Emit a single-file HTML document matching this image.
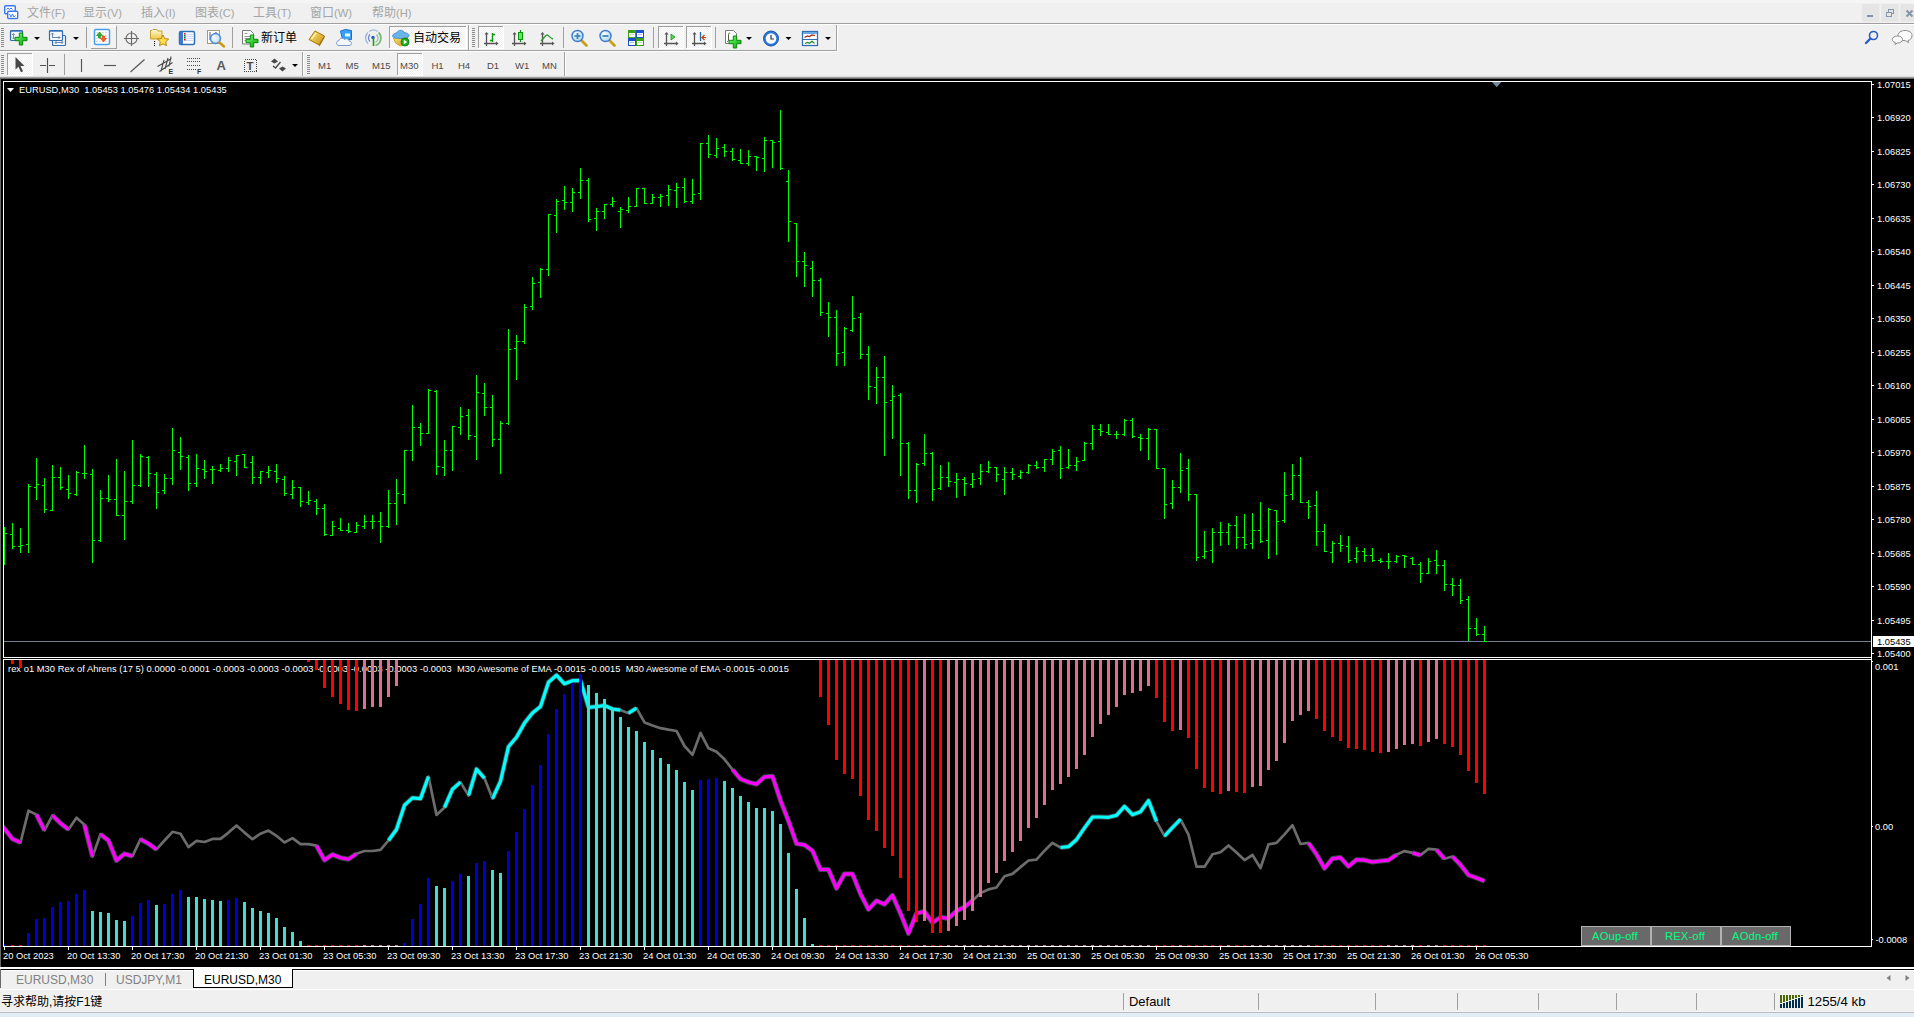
<!DOCTYPE html>
<html><head><meta charset="utf-8"><title>MetaTrader 4</title>
<style>html,body{margin:0;padding:0}body{width:1914px;height:1017px;position:relative;overflow:hidden;background:#f0f0f0;font-family:"Liberation Sans","Noto Sans CJK SC",sans-serif}svg{display:block}svg text{white-space:pre}</style>
</head><body>
<svg width="1914" height="79" viewBox="0 0 1914 79" style="position:absolute;left:0;top:0">
<defs><pattern id="chk" width="2" height="2" patternUnits="userSpaceOnUse"><rect width="2" height="2" fill="#f0f0f0"/><rect width="1" height="1" fill="#fff"/><rect x="1" y="1" width="1" height="1" fill="#fff"/></pattern><linearGradient id="gGreen" x1="0" y1="0" x2="1" y2="1"><stop offset="0" stop-color="#7dff7d"/><stop offset="1" stop-color="#00a000"/></linearGradient><linearGradient id="gGold" x1="0" y1="0" x2="1" y2="1"><stop offset="0" stop-color="#ffe680"/><stop offset="1" stop-color="#c89010"/></linearGradient><linearGradient id="gFold" x1="0" y1="0" x2="0" y2="1"><stop offset="0" stop-color="#fffbe0"/><stop offset="1" stop-color="#f0c840"/></linearGradient><linearGradient id="gBlue" x1="0" y1="0" x2="0" y2="1"><stop offset="0" stop-color="#4aa0f0"/><stop offset="1" stop-color="#1a5cb8"/></linearGradient><radialGradient id="gLens" cx="0.4" cy="0.35" r="0.7"><stop offset="0" stop-color="#ffffff"/><stop offset="1" stop-color="#a8d4f0"/></radialGradient><path id="dd" d="M0 0h6l-3 3z" fill="#000"/></defs>
<rect width="1914" height="79" fill="#f0f0f0"/><rect width="1914" height="3" fill="#f5f5f5"/>
<g shape-rendering="crispEdges">
<rect x="0" y="23" width="1914" height="1" fill="#a0a0a0"/><rect x="0" y="24" width="1914" height="1" fill="#fff"/>
<rect x="0" y="50" width="837" height="1" fill="#a0a0a0"/><rect x="0" y="51" width="838" height="1" fill="#fff"/>
<rect x="836" y="25" width="1" height="26" fill="#a0a0a0"/><rect x="837" y="25" width="1" height="27" fill="#fff"/>
<rect x="0" y="76" width="1914" height="1" fill="#dcdcdc"/><rect x="0" y="77" width="1914" height="1" fill="#a0a0a0"/><rect x="0" y="78" width="1914" height="1" fill="#696969"/>
<rect x="1" y="28" width="3" height="1" fill="#8c8c8c"/><rect x="1" y="30" width="3" height="1" fill="#8c8c8c"/><rect x="1" y="32" width="3" height="1" fill="#8c8c8c"/><rect x="1" y="34" width="3" height="1" fill="#8c8c8c"/><rect x="1" y="36" width="3" height="1" fill="#8c8c8c"/><rect x="1" y="38" width="3" height="1" fill="#8c8c8c"/><rect x="1" y="40" width="3" height="1" fill="#8c8c8c"/><rect x="1" y="42" width="3" height="1" fill="#8c8c8c"/><rect x="1" y="44" width="3" height="1" fill="#8c8c8c"/><rect x="1" y="46" width="3" height="1" fill="#8c8c8c"/>
<rect x="472" y="28" width="3" height="1" fill="#8c8c8c"/><rect x="472" y="30" width="3" height="1" fill="#8c8c8c"/><rect x="472" y="32" width="3" height="1" fill="#8c8c8c"/><rect x="472" y="34" width="3" height="1" fill="#8c8c8c"/><rect x="472" y="36" width="3" height="1" fill="#8c8c8c"/><rect x="472" y="38" width="3" height="1" fill="#8c8c8c"/><rect x="472" y="40" width="3" height="1" fill="#8c8c8c"/><rect x="472" y="42" width="3" height="1" fill="#8c8c8c"/><rect x="472" y="44" width="3" height="1" fill="#8c8c8c"/><rect x="472" y="46" width="3" height="1" fill="#8c8c8c"/>
<rect x="1" y="55" width="3" height="1" fill="#8c8c8c"/><rect x="1" y="57" width="3" height="1" fill="#8c8c8c"/><rect x="1" y="59" width="3" height="1" fill="#8c8c8c"/><rect x="1" y="61" width="3" height="1" fill="#8c8c8c"/><rect x="1" y="63" width="3" height="1" fill="#8c8c8c"/><rect x="1" y="65" width="3" height="1" fill="#8c8c8c"/><rect x="1" y="67" width="3" height="1" fill="#8c8c8c"/><rect x="1" y="69" width="3" height="1" fill="#8c8c8c"/><rect x="1" y="71" width="3" height="1" fill="#8c8c8c"/><rect x="1" y="73" width="3" height="1" fill="#8c8c8c"/>
<rect x="307" y="55" width="3" height="1" fill="#8c8c8c"/><rect x="307" y="57" width="3" height="1" fill="#8c8c8c"/><rect x="307" y="59" width="3" height="1" fill="#8c8c8c"/><rect x="307" y="61" width="3" height="1" fill="#8c8c8c"/><rect x="307" y="63" width="3" height="1" fill="#8c8c8c"/><rect x="307" y="65" width="3" height="1" fill="#8c8c8c"/><rect x="307" y="67" width="3" height="1" fill="#8c8c8c"/><rect x="307" y="69" width="3" height="1" fill="#8c8c8c"/><rect x="307" y="71" width="3" height="1" fill="#8c8c8c"/><rect x="307" y="73" width="3" height="1" fill="#8c8c8c"/>
<rect x="86" y="27" width="1" height="21" fill="#a0a0a0"/>
<rect x="232" y="27" width="1" height="21" fill="#a0a0a0"/>
<rect x="563" y="27" width="1" height="21" fill="#a0a0a0"/>
<rect x="653" y="27" width="1" height="21" fill="#a0a0a0"/>
<rect x="715" y="27" width="1" height="21" fill="#a0a0a0"/>
<rect x="468" y="25" width="1" height="25" fill="#a0a0a0"/><rect x="469" y="25" width="1" height="25" fill="#fff"/>
<rect x="64" y="54" width="1" height="21" fill="#a0a0a0"/>
<rect x="302" y="52" width="1" height="24" fill="#a0a0a0"/><rect x="303" y="52" width="1" height="24" fill="#fff"/>
<rect x="564" y="52" width="1" height="24" fill="#a0a0a0"/><rect x="565" y="52" width="1" height="24" fill="#fff"/>
<rect x="91" y="26" width="26" height="23" fill="#f3f3f3"/><rect x="91" y="26" width="26" height="1" fill="#fff"/><rect x="91" y="26" width="1" height="23" fill="#fff"/><rect x="91" y="48" width="26" height="1" fill="#a0a0a0"/><rect x="116" y="26" width="1" height="23" fill="#a0a0a0"/>
<rect x="389" y="26" width="78" height="23" fill="url(#chk)"/><rect x="389" y="26" width="78" height="1" fill="#a0a0a0"/><rect x="389" y="26" width="1" height="23" fill="#a0a0a0"/><rect x="389" y="48" width="78" height="1" fill="#fff"/><rect x="466" y="26" width="1" height="23" fill="#fff"/>
<rect x="478" y="26" width="26" height="23" fill="url(#chk)"/><rect x="478" y="26" width="26" height="1" fill="#a0a0a0"/><rect x="478" y="26" width="1" height="23" fill="#a0a0a0"/><rect x="478" y="48" width="26" height="1" fill="#fff"/><rect x="503" y="26" width="1" height="23" fill="#fff"/>
<rect x="658" y="26" width="26" height="23" fill="url(#chk)"/><rect x="658" y="26" width="26" height="1" fill="#a0a0a0"/><rect x="658" y="26" width="1" height="23" fill="#a0a0a0"/><rect x="658" y="48" width="26" height="1" fill="#fff"/><rect x="683" y="26" width="1" height="23" fill="#fff"/>
<rect x="686" y="26" width="26" height="23" fill="url(#chk)"/><rect x="686" y="26" width="26" height="1" fill="#a0a0a0"/><rect x="686" y="26" width="1" height="23" fill="#a0a0a0"/><rect x="686" y="48" width="26" height="1" fill="#fff"/><rect x="711" y="26" width="1" height="23" fill="#fff"/>
<rect x="7" y="53" width="26" height="23" fill="url(#chk)"/><rect x="7" y="53" width="26" height="1" fill="#a0a0a0"/><rect x="7" y="53" width="1" height="23" fill="#a0a0a0"/><rect x="7" y="75" width="26" height="1" fill="#fff"/><rect x="32" y="53" width="1" height="23" fill="#fff"/>
<rect x="397" y="53" width="26" height="23" fill="url(#chk)"/><rect x="397" y="53" width="26" height="1" fill="#a0a0a0"/><rect x="397" y="53" width="1" height="23" fill="#a0a0a0"/><rect x="397" y="75" width="26" height="1" fill="#fff"/><rect x="422" y="53" width="1" height="23" fill="#fff"/>
</g>
<g font-family="Liberation Sans, Noto Sans CJK SC, sans-serif" font-size="12px" fill="#a4a4a4">
<text x="27" y="17.3">文件<tspan font-size="11.2px">(F)</tspan></text>
<text x="83" y="17.3">显示<tspan font-size="11.2px">(V)</tspan></text>
<text x="141" y="17.3">插入<tspan font-size="11.2px">(I)</tspan></text>
<text x="195" y="17.3">图表<tspan font-size="11.2px">(C)</tspan></text>
<text x="253" y="17.3">工具<tspan font-size="11.2px">(T)</tspan></text>
<text x="310" y="17.3">窗口<tspan font-size="11.2px">(W)</tspan></text>
<text x="372" y="17.3">帮助<tspan font-size="11.2px">(H)</tspan></text>
</g>
<g fill="none" stroke="#3c78f0" stroke-width="1.4"><rect x="4.7" y="5.7" width="10.600" height="8" rx="1" fill="#f6f9ff"/><rect x="7.700" y="11.200" width="10" height="7.300" rx="1" fill="#fff"/><path d="M9.500 14l1.500 3 1.500-3 1.500 3 1.500-1.500" stroke-width="1"/><path d="M6.500 9.500l1.500-1.500 1.500 1.500 1.500-1.500 1.500 1.500" stroke-width="1"/></g>
<g shape-rendering="crispEdges"><rect x="1862" y="4" width="17.500" height="17.700" rx="1.500" fill="#e5e5e5" shape-rendering="auto"/><rect x="1881.300" y="4" width="17.300" height="17.700" rx="1.500" fill="#e5e5e5" shape-rendering="auto"/><rect x="1900.400" y="4" width="16" height="17.700" rx="1.500" fill="#e5e5e5" shape-rendering="auto"/><rect x="1867" y="15" width="6" height="2" fill="#8494aa"/><g fill="none" stroke="#8494aa" stroke-width="1.5"><rect x="1888.5" y="9.5" width="5" height="4"/><rect x="1886.5" y="12.500" width="5" height="4" fill="#e6e6e6"/></g></g><path d="M1906.500 10.500l6 6M1912.500 10.500l-6 6" stroke="#8494aa" stroke-width="2" fill="none"/>
<g><rect x="10.500" y="30.500" width="12" height="10" rx="1" fill="#f4f6fa" stroke="#2e6fb5" stroke-width="1.2"/><rect x="10.500" y="30.300" width="12" height="1.400" fill="#2e6fb5"/><path d="M13.500 33.500v5.500M12 35l1.500-1.500 1.500 1.500M12 37.500l1.500 1.500 1.500-1.500" stroke="#7a96b8" fill="none" stroke-width="1"/><path d="M19.3 33h3.4v4.3h4.3v3.4h-4.3v4.3h-3.4v-4.3h-4.3v-3.4h4.3z" fill="url(#gGreen)" stroke="#0a8a0a" stroke-width="1"/></g>
<use href="#dd" x="34" y="37"/>
<g fill="#f4f6fa" stroke="#2e6fb5" stroke-width="1.2"><rect x="52.500" y="35.500" width="13" height="10" rx="1"/><rect x="49.500" y="30.500" width="13" height="10" rx="1"/></g><rect x="49.500" y="30.300" width="13" height="1.400" fill="#2e6fb5"/><path d="M52.500 33v5M51 34.500l1.500-1.500 1.500 1.500M52 37.500h8M58.500 36l1.500 1.500-1.500 1.500M55 42.500h8M56.500 41l-1.500 1.500 1.500 1.500M61.500 41l1.500 1.500-1.500 1.500" stroke="#6a8ab0" fill="none"/>
<use href="#dd" x="73" y="37"/>
<g><rect x="94.500" y="29.500" width="15" height="15" rx="1.500" fill="#fff" stroke="#4aa0f0" stroke-width="1.5"/><path d="M96 32.500h12M96 35.500h12M96 38.500h12M96 41.500h12" stroke="#dcdcdc" stroke-dasharray="2 1"/><path d="M96.500 35.500l3-3.500 3 3.500h-1.800v2.500h-2.400v-2.500z" fill="#2fae2f" stroke="#178a17" stroke-width=".6"/><path d="M100.500 38.500l3 3.500 3-3.500h-1.800v-2.500h-2.400v2.500z" fill="#ff5a1f" stroke="#d43c00" stroke-width=".6"/></g>
<g fill="none" stroke="#6a6a6a" stroke-width="1.150"><circle cx="131.500" cy="38.500" r="5.500"/><path d="M131.500 31v15M124 38.500h15" /></g>
<g><path d="M150.500 33v-2.500h1.500l1-1h4l1 1.500h4v8h-11.500z" fill="url(#gFold)" stroke="#c8a030" stroke-width="1"/><path d="M163 35l1.700 3.600 3.900.5-2.900 2.700.8 3.900-3.500-1.900-3.500 1.900.8-3.900-2.900-2.700 3.900-.5z" fill="#ffe04a" stroke="#b8860b" stroke-width="1"/><path d="M154.500 41v5" stroke="#000" stroke-dasharray="1 1"/></g>
<g><rect x="179.500" y="31.500" width="15" height="13" rx="1.500" fill="#fff" stroke="#2e6fb5" stroke-width="1.500"/><rect x="180" y="32" width="3" height="12" fill="#3a7bd5"/><path d="M185 34.500h8M185 36.500h8M185 38.500h8M185 40.500h8" stroke="#c9d9f5"/><g fill="#e00"><rect x="184" y="33" width="1.500" height="1.500"/><rect x="184" y="39" width="1.500" height="1.500"/></g><g fill="#252"><rect x="184" y="35" width="1.500" height="1.500"/><rect x="184" y="37" width="1.500" height="1.500"/></g></g>
<g><rect x="207.500" y="30.500" width="12" height="13" fill="#fff" stroke="#a89878" stroke-width="1"/><path d="M210 32v8M216 32v6" stroke="#555"/><circle cx="215.500" cy="38.500" r="5" fill="url(#gLens)" fill-opacity=".85" stroke="#4a86d8" stroke-width="1.300"/><path d="M219.500 42.500l4.500 4" stroke="#c89a10" stroke-width="2.500" stroke-linecap="round"/></g>
<g><path d="M242.500 30.500h8l3 3v10.500h-11z" fill="#fff" stroke="#7a7a7a" stroke-width="1"/><path d="M244.500 33.500h3M244.500 36.500h6M244.500 38.500h6M244.500 40.500h4" stroke="#9a9a9a"/><path d="M250.3 35h3.4v4.3h4.3v3.4h-4.3v4.3h-3.4v-4.3h-4.3v-3.4h4.3z" fill="url(#gGreen)" stroke="#0a8a0a" stroke-width="1"/></g>
<text x="261" y="41.5" font-family="Liberation Sans, Noto Sans CJK SC, sans-serif" font-size="12px" fill="#000">新订单</text>
<g><path d="M309 39.500l6-8.500 9.500 5-5.500 9z" fill="url(#gGold)" stroke="#a87408" stroke-width="1"/><path d="M319 45l5.500-9v1.800l-5 8.700z" fill="#9a6c08"/><path d="M311.500 39l4.500-6" stroke="#fff3b0" stroke-width="1.5"/></g>
<g><path d="M340.500 31l5-1.500 6 1v9h-9z" fill="#3aa0f5" stroke="#1a70d0" stroke-width="1"/><path d="M345 33.500h5v3h-5z" fill="#dff"/><path d="M339 45.500c-3 0-3.500-4.500 0-5 .5-2.500 4-3 5.500-1 1.500-1.500 4.500-.5 4.500 1.500 3.500 0 3.500 4.500 0 4.500z" fill="#f4f8ff" stroke="#7a9ad0" stroke-width="1"/></g>
<g fill="none"><path d="M368 32.500a7.500 7.500 0 0 0 0 11" stroke="#9ab0e0" stroke-width="1.300"/><path d="M370 34.500a4.800 4.800 0 0 0 0 7" stroke="#6a8ad8" stroke-width="1.300"/><path d="M378.500 32.500a7.800 7.800 0 0 1-3 13" stroke="#7ab87a" stroke-width="1.800"/><path d="M376.500 34.500a5 5 0 0 1-1 8" stroke="#8abf9a" stroke-width="1.300"/><path d="M369 31.500a7.500 7.500 0 0 1 9 0" stroke="#a8bce0" stroke-width="1.200"/><circle cx="373" cy="37.500" r="1.700" fill="#2a5ac8"/><path d="M373.500 38v8" stroke="#2a9a2a" stroke-width="1.700"/></g>
<g><path d="M393.500 38l2 5 5 3 6-3 1.500-6z" fill="url(#gGold)" stroke="#c89a10" stroke-width=".8"/><path d="M392.500 36c0-2 3-3 5-3.500 0-3 6-3 6.500 0 3 .3 5 1.500 5 3 0 2-4 3-8.500 3s-8-.8-8-2.500z" fill="#6ab4e8" stroke="#3a8ac8" stroke-width=".8"/><circle cx="405" cy="42" r="4" fill="#1db01d" stroke="#0a7a0a" stroke-width=".8"/><path d="M403.800 39.800l3.400 2.200-3.400 2.200z" fill="#fff"/></g>
<text x="413" y="41.5" font-family="Liberation Sans, Noto Sans CJK SC, sans-serif" font-size="12px" fill="#000">自动交易</text>
<g stroke="#555" fill="#555" stroke-width="1.300"><path d="M486.5 46.0V33.5M484.0 43.5H497.0" fill="none"/><path d="M484.5 34.5l2-2.500 2 2.500z" stroke="none"/><path d="M496.0 41.5l2.500 2-2.500 2z" stroke="none"/></g>
<path d="M492.500 33v9M492.500 34.500h2.500M490 40.500h2.500" stroke="#0a960a" stroke-width="1.400" fill="none"/>
<g stroke="#555" fill="#555" stroke-width="1.300"><path d="M514.5 46.0V33.5M512.0 43.5H525.0" fill="none"/><path d="M512.5 34.5l2-2.500 2 2.500z" stroke="none"/><path d="M524.0 41.5l2.500 2-2.500 2z" stroke="none"/></g>
<path d="M520.500 30v12" stroke="#0a960a" stroke-width="1.200"/><rect x="518.500" y="32.500" width="4" height="7" fill="#5aea5a" stroke="#0a960a"/>
<g stroke="#555" fill="#555" stroke-width="1.300"><path d="M542.5 46.0V33.5M540.0 43.5H553.0" fill="none"/><path d="M540.5 34.5l2-2.500 2 2.500z" stroke="none"/><path d="M552.0 41.5l2.500 2-2.500 2z" stroke="none"/></g>
<path d="M541 41c3-3 4.500-6 6-6s3.500 3.500 6 4" stroke="#2a962a" stroke-width="1.300" fill="none"/>
<path d="M581.0 40l5.500 5.500" stroke="#c8a018" stroke-width="2.800" stroke-linecap="round"/><circle cx="577.5" cy="36" r="5.500" fill="url(#gLens)" stroke="#3a7ad0" stroke-width="1.400"/><path d="M574.5 36h6" stroke="#3a86b8" stroke-width="1.800"/><path d="M577.5 33v6" stroke="#3a86b8" stroke-width="1.800"/>
<path d="M609.0 40l5.500 5.500" stroke="#c8a018" stroke-width="2.800" stroke-linecap="round"/><circle cx="605.5" cy="36" r="5.500" fill="url(#gLens)" stroke="#3a7ad0" stroke-width="1.400"/><path d="M602.5 36h6" stroke="#3a86b8" stroke-width="1.800"/>
<g shape-rendering="crispEdges"><rect x="628" y="30" width="8" height="8" fill="#3aa01a"/><rect x="636" y="30" width="8" height="8" fill="#1a50d0"/><rect x="628" y="38" width="8" height="8" fill="#1a50d0"/><rect x="636" y="38" width="8" height="8" fill="#3aa01a"/><g fill="#fff"><rect x="629" y="33" width="6" height="4"/><rect x="637" y="33" width="6" height="4"/><rect x="629" y="41" width="6" height="4"/><rect x="637" y="41" width="6" height="4"/></g><g fill="#b8d8a8"><rect x="630" y="34" width="4" height="1"/><rect x="638" y="42" width="4" height="1"/></g><g fill="#a8b8f0"><rect x="638" y="34" width="4" height="1"/><rect x="630" y="42" width="4" height="1"/></g></g>
<g stroke="#555" fill="#555" stroke-width="1.300"><path d="M666.5 46.0V33.5M664.0 43.5H677.0" fill="none"/><path d="M664.5 34.5l2-2.500 2 2.500z" stroke="none"/><path d="M676.0 41.5l2.500 2-2.500 2z" stroke="none"/></g>
<path d="M671 34l4 3-4 3z" fill="#5ad85a" stroke="#0a960a" stroke-width=".8"/>
<g stroke="#555" fill="#555" stroke-width="1.300"><path d="M694.5 46.0V33.5M692.0 43.5H705.0" fill="none"/><path d="M692.5 34.5l2-2.500 2 2.500z" stroke="none"/><path d="M704.0 41.5l2.500 2-2.500 2z" stroke="none"/></g>
<path d="M700.500 32v9" stroke="#1a6ab0" stroke-width="1.300"/><path d="M706 37.500h-3.500M704.500 35l-2.500 2.500 2.500 2.500" stroke="#d03a00" stroke-width="1.200" fill="none"/>
<g><path d="M725.500 30.500h8l3 3v10h-11z" fill="#fff" stroke="#7a7a7a"/><path d="M730 33c-1.500 0-1.500 1-1.500 2v5c0 1-.5 1.500-1.500 1.500" stroke="#554" fill="none"/><path d="M733.3 36h3.4v4.3h4.3v3.4h-4.3v4.3h-3.4v-4.3h-4.3v-3.4h4.3z" fill="url(#gGreen)" stroke="#0a8a0a" stroke-width="1"/></g>
<use href="#dd" x="746" y="37"/>
<g><circle cx="771" cy="38.500" r="7.500" fill="#2a78d8" stroke="#1a56b0"/><circle cx="771" cy="38.500" r="5.300" fill="#f4f8ff"/><path d="M771 35v4h3" stroke="#333" stroke-width="1.200" fill="none"/></g>
<use href="#dd" x="785.500" y="37"/>
<g><rect x="802.500" y="31.500" width="15" height="14" fill="#fff" stroke="#2e6fb5" stroke-width="1.300"/><rect x="803" y="32" width="14" height="2" fill="#6aa8e8"/><path d="M803 39.500h14" stroke="#2e6fb5"/><path d="M804.500 37.500l3-1.500 2 .5 2.500-1.500 3 .5" stroke="#a8200a" stroke-width="1.200" fill="none"/><path d="M805 43.500l2.500-1 2 .8 2.500-2 2.500 2" stroke="#1a8a2a" stroke-width="1.200" fill="none"/></g>
<use href="#dd" x="825" y="37"/>
<g><circle cx="1873.500" cy="35.500" r="4" fill="none" stroke="#2a5ac8" stroke-width="1.600"/><path d="M1870.500 38.500l-4.500 4.500" stroke="#2a5ac8" stroke-width="2.400" stroke-linecap="round"/></g>
<g fill="#fbfbfb" stroke="#8a8a8a" stroke-width="1"><path d="M1905 30.500c4 0 7 2 7 5s-2 4.500-4 5l.5 2-3-1.800c-4 0-7.500-2-7.500-5s3-5.200 7-5.200z"/><path d="M1897.500 36c3 0 5 1.500 5 3.500s-2 3.500-5 3.500l-2.500 1.500.3-2c-2-.5-3-1.600-3-3 0-2 2.200-3.500 5.200-3.500z"/></g>
<path d="M15.500 57v12.500l3-2.800 2.500 5.500 2-1-2.500-5.300h4z" fill="#484848"/>
<path d="M47.500 58v15M40 65.500h6M49 65.500h6" stroke="#505050" stroke-width="1.150" fill="none"/>
<path d="M81.500 59v13" stroke="#555" stroke-width="1.150"/><path d="M104 65.500h12" stroke="#555" stroke-width="1.150"/><path d="M130.500 72l14-12.500" stroke="#555" stroke-width="1.150"/>
<g stroke="#484848" stroke-width="1.100" fill="none"><path d="M157.500 66.500l14-8M159.500 71.500l13-9M161 71l3-11M165 69l3-11M169 66.500l2-10"/></g><text x="168.500" y="74" font-family="Liberation Sans, sans-serif" font-size="7px" font-weight="bold" fill="#333">E</text>
<g stroke="#484848" stroke-width="1" stroke-dasharray="1 1"><path d="M187 58.500h14M187 61.500h14M187 65.500h14M187 69.500h9"/></g><text x="197" y="74" font-family="Liberation Sans, sans-serif" font-size="7px" font-weight="bold" fill="#333">F</text>
<text x="216.500" y="70" font-family="Liberation Sans, sans-serif" font-size="13px" font-weight="bold" fill="#5a5a5a">A</text>
<rect x="244.500" y="59.500" width="12" height="12" fill="none" stroke="#484848" stroke-dasharray="1 1" shape-rendering="crispEdges"/><text x="246.500" y="70" font-family="Liberation Sans, sans-serif" font-size="11.5px" font-weight="bold" fill="#484848">T</text>
<g fill="#484848"><path d="M271 61.500l3.500-3 3.500 3-3.500 2z"/><path d="M279 68.500l3.500-2 3.500 2-3.500 3z"/><path d="M273 66l2.500 2 5-6" stroke="#484848" stroke-width="1.300" fill="none"/></g>
<use href="#dd" x="292" y="64"/>
<g font-family="Liberation Sans, sans-serif" font-size="9.500px" fill="#4a4a4a">
<text x="318" y="69">M1</text>
<text x="345.5" y="69">M5</text>
<text x="372" y="69">M15</text>
<text x="400" y="69">M30</text>
<text x="431.5" y="69">H1</text>
<text x="458" y="69">H4</text>
<text x="487" y="69">D1</text>
<text x="515" y="69">W1</text>
<text x="542" y="69">MN</text>
</g>
</svg>
<svg width="1914" height="889" viewBox="0 79 1914 889" style="position:absolute;left:0;top:79px" shape-rendering="crispEdges">
<rect x="0" y="79" width="1914" height="888" fill="#000"/>
<rect x="0" y="967" width="1914" height="2" fill="#fff"/>
<rect x="0" y="79" width="1" height="888" fill="#696969"/>
<g fill="#fff">
<rect x="3" y="81" width="1869" height="1"/>
<rect x="3" y="81" width="1" height="577"/>
<rect x="1871" y="81" width="1" height="866"/>
<rect x="3" y="657" width="1869" height="1"/>
<rect x="3" y="659" width="1869" height="1"/>
<rect x="3" y="659" width="1" height="288"/>
<rect x="3" y="946" width="1869" height="1"/>
</g>
<defs><clipPath id="cs"><rect x="4" y="660" width="1867" height="286"/></clipPath><clipPath id="cm"><rect x="4" y="82" width="1867" height="575"/></clipPath></defs>
<rect x="4" y="641" width="1867" height="1" fill="#708090"/>
<g fill="#00ff00" clip-path="url(#cm)">
<rect x="4" y="527" width="1" height="38"/>
<rect x="2" y="533" width="2" height="1"/>
<rect x="5" y="533" width="2" height="1"/>
<rect x="12" y="523" width="1" height="26"/>
<rect x="10" y="534" width="2" height="1"/>
<rect x="13" y="546" width="2" height="1"/>
<rect x="20" y="528" width="1" height="25"/>
<rect x="18" y="546" width="2" height="1"/>
<rect x="21" y="545" width="2" height="1"/>
<rect x="28" y="484" width="1" height="69"/>
<rect x="26" y="544" width="2" height="1"/>
<rect x="29" y="486" width="2" height="1"/>
<rect x="36" y="458" width="1" height="42"/>
<rect x="34" y="487" width="2" height="1"/>
<rect x="37" y="484" width="2" height="1"/>
<rect x="44" y="478" width="1" height="35"/>
<rect x="42" y="485" width="2" height="1"/>
<rect x="45" y="509" width="2" height="1"/>
<rect x="52" y="465" width="1" height="46"/>
<rect x="50" y="510" width="2" height="1"/>
<rect x="53" y="477" width="2" height="1"/>
<rect x="60" y="467" width="1" height="23"/>
<rect x="58" y="477" width="2" height="1"/>
<rect x="61" y="487" width="2" height="1"/>
<rect x="68" y="475" width="1" height="24"/>
<rect x="66" y="489" width="2" height="1"/>
<rect x="69" y="493" width="2" height="1"/>
<rect x="76" y="471" width="1" height="25"/>
<rect x="74" y="494" width="2" height="1"/>
<rect x="77" y="472" width="2" height="1"/>
<rect x="84" y="445" width="1" height="34"/>
<rect x="82" y="473" width="2" height="1"/>
<rect x="85" y="473" width="2" height="1"/>
<rect x="92" y="469" width="1" height="94"/>
<rect x="90" y="474" width="2" height="1"/>
<rect x="93" y="540" width="2" height="1"/>
<rect x="100" y="490" width="1" height="52"/>
<rect x="98" y="540" width="2" height="1"/>
<rect x="101" y="498" width="2" height="1"/>
<rect x="108" y="475" width="1" height="27"/>
<rect x="106" y="498" width="2" height="1"/>
<rect x="109" y="499" width="2" height="1"/>
<rect x="116" y="459" width="1" height="57"/>
<rect x="114" y="499" width="2" height="1"/>
<rect x="117" y="515" width="2" height="1"/>
<rect x="124" y="471" width="1" height="69"/>
<rect x="122" y="515" width="2" height="1"/>
<rect x="125" y="501" width="2" height="1"/>
<rect x="132" y="440" width="1" height="64"/>
<rect x="130" y="501" width="2" height="1"/>
<rect x="133" y="485" width="2" height="1"/>
<rect x="140" y="454" width="1" height="33"/>
<rect x="138" y="485" width="2" height="1"/>
<rect x="141" y="456" width="2" height="1"/>
<rect x="148" y="456" width="1" height="31"/>
<rect x="146" y="457" width="2" height="1"/>
<rect x="149" y="473" width="2" height="1"/>
<rect x="156" y="472" width="1" height="37"/>
<rect x="154" y="474" width="2" height="1"/>
<rect x="157" y="492" width="2" height="1"/>
<rect x="164" y="474" width="1" height="20"/>
<rect x="162" y="490" width="2" height="1"/>
<rect x="165" y="478" width="2" height="1"/>
<rect x="172" y="428" width="1" height="57"/>
<rect x="170" y="478" width="2" height="1"/>
<rect x="173" y="450" width="2" height="1"/>
<rect x="180" y="437" width="1" height="33"/>
<rect x="178" y="452" width="2" height="1"/>
<rect x="181" y="456" width="2" height="1"/>
<rect x="188" y="455" width="1" height="36"/>
<rect x="186" y="457" width="2" height="1"/>
<rect x="189" y="483" width="2" height="1"/>
<rect x="196" y="454" width="1" height="33"/>
<rect x="194" y="483" width="2" height="1"/>
<rect x="197" y="468" width="2" height="1"/>
<rect x="204" y="460" width="1" height="19"/>
<rect x="202" y="469" width="2" height="1"/>
<rect x="205" y="471" width="2" height="1"/>
<rect x="212" y="466" width="1" height="18"/>
<rect x="210" y="469" width="2" height="1"/>
<rect x="213" y="469" width="2" height="1"/>
<rect x="220" y="464" width="1" height="8"/>
<rect x="218" y="470" width="2" height="1"/>
<rect x="221" y="468" width="2" height="1"/>
<rect x="228" y="457" width="1" height="15"/>
<rect x="226" y="468" width="2" height="1"/>
<rect x="229" y="460" width="2" height="1"/>
<rect x="236" y="455" width="1" height="21"/>
<rect x="234" y="461" width="2" height="1"/>
<rect x="237" y="455" width="2" height="1"/>
<rect x="244" y="454" width="1" height="14"/>
<rect x="242" y="454" width="2" height="1"/>
<rect x="245" y="467" width="2" height="1"/>
<rect x="252" y="456" width="1" height="28"/>
<rect x="250" y="462" width="2" height="1"/>
<rect x="253" y="477" width="2" height="1"/>
<rect x="260" y="471" width="1" height="13"/>
<rect x="258" y="477" width="2" height="1"/>
<rect x="261" y="471" width="2" height="1"/>
<rect x="268" y="466" width="1" height="12"/>
<rect x="266" y="472" width="2" height="1"/>
<rect x="269" y="470" width="2" height="1"/>
<rect x="276" y="464" width="1" height="19"/>
<rect x="274" y="471" width="2" height="1"/>
<rect x="277" y="478" width="2" height="1"/>
<rect x="284" y="476" width="1" height="20"/>
<rect x="282" y="479" width="2" height="1"/>
<rect x="285" y="493" width="2" height="1"/>
<rect x="292" y="480" width="1" height="19"/>
<rect x="290" y="494" width="2" height="1"/>
<rect x="293" y="487" width="2" height="1"/>
<rect x="300" y="487" width="1" height="20"/>
<rect x="298" y="487" width="2" height="1"/>
<rect x="301" y="501" width="2" height="1"/>
<rect x="308" y="491" width="1" height="14"/>
<rect x="306" y="502" width="2" height="1"/>
<rect x="309" y="500" width="2" height="1"/>
<rect x="316" y="499" width="1" height="16"/>
<rect x="314" y="501" width="2" height="1"/>
<rect x="317" y="508" width="2" height="1"/>
<rect x="324" y="504" width="1" height="32"/>
<rect x="322" y="508" width="2" height="1"/>
<rect x="325" y="534" width="2" height="1"/>
<rect x="332" y="521" width="1" height="15"/>
<rect x="330" y="535" width="2" height="1"/>
<rect x="333" y="526" width="2" height="1"/>
<rect x="340" y="518" width="1" height="13"/>
<rect x="338" y="528" width="2" height="1"/>
<rect x="341" y="530" width="2" height="1"/>
<rect x="348" y="523" width="1" height="10"/>
<rect x="346" y="530" width="2" height="1"/>
<rect x="349" y="531" width="2" height="1"/>
<rect x="356" y="522" width="1" height="11"/>
<rect x="354" y="532" width="2" height="1"/>
<rect x="357" y="525" width="2" height="1"/>
<rect x="364" y="515" width="1" height="14"/>
<rect x="362" y="526" width="2" height="1"/>
<rect x="365" y="521" width="2" height="1"/>
<rect x="372" y="515" width="1" height="14"/>
<rect x="370" y="521" width="2" height="1"/>
<rect x="373" y="521" width="2" height="1"/>
<rect x="380" y="512" width="1" height="31"/>
<rect x="378" y="521" width="2" height="1"/>
<rect x="381" y="526" width="2" height="1"/>
<rect x="388" y="490" width="1" height="38"/>
<rect x="386" y="526" width="2" height="1"/>
<rect x="389" y="503" width="2" height="1"/>
<rect x="396" y="479" width="1" height="46"/>
<rect x="394" y="503" width="2" height="1"/>
<rect x="397" y="493" width="2" height="1"/>
<rect x="404" y="450" width="1" height="54"/>
<rect x="402" y="494" width="2" height="1"/>
<rect x="405" y="450" width="2" height="1"/>
<rect x="412" y="405" width="1" height="56"/>
<rect x="410" y="450" width="2" height="1"/>
<rect x="413" y="427" width="2" height="1"/>
<rect x="420" y="423" width="1" height="23"/>
<rect x="418" y="427" width="2" height="1"/>
<rect x="421" y="433" width="2" height="1"/>
<rect x="428" y="389" width="1" height="45"/>
<rect x="426" y="433" width="2" height="1"/>
<rect x="429" y="390" width="2" height="1"/>
<rect x="436" y="390" width="1" height="85"/>
<rect x="434" y="391" width="2" height="1"/>
<rect x="437" y="466" width="2" height="1"/>
<rect x="444" y="440" width="1" height="36"/>
<rect x="442" y="467" width="2" height="1"/>
<rect x="445" y="450" width="2" height="1"/>
<rect x="452" y="426" width="1" height="45"/>
<rect x="450" y="450" width="2" height="1"/>
<rect x="453" y="426" width="2" height="1"/>
<rect x="460" y="407" width="1" height="28"/>
<rect x="458" y="427" width="2" height="1"/>
<rect x="461" y="416" width="2" height="1"/>
<rect x="468" y="409" width="1" height="31"/>
<rect x="466" y="415" width="2" height="1"/>
<rect x="469" y="435" width="2" height="1"/>
<rect x="476" y="375" width="1" height="85"/>
<rect x="474" y="436" width="2" height="1"/>
<rect x="477" y="392" width="2" height="1"/>
<rect x="484" y="383" width="1" height="33"/>
<rect x="482" y="393" width="2" height="1"/>
<rect x="485" y="407" width="2" height="1"/>
<rect x="492" y="395" width="1" height="52"/>
<rect x="490" y="407" width="2" height="1"/>
<rect x="493" y="439" width="2" height="1"/>
<rect x="500" y="421" width="1" height="53"/>
<rect x="498" y="439" width="2" height="1"/>
<rect x="501" y="423" width="2" height="1"/>
<rect x="508" y="329" width="1" height="96"/>
<rect x="506" y="423" width="2" height="1"/>
<rect x="509" y="349" width="2" height="1"/>
<rect x="516" y="335" width="1" height="45"/>
<rect x="514" y="348" width="2" height="1"/>
<rect x="517" y="341" width="2" height="1"/>
<rect x="524" y="304" width="1" height="40"/>
<rect x="522" y="341" width="2" height="1"/>
<rect x="525" y="307" width="2" height="1"/>
<rect x="532" y="277" width="1" height="33"/>
<rect x="530" y="306" width="2" height="1"/>
<rect x="533" y="283" width="2" height="1"/>
<rect x="540" y="268" width="1" height="30"/>
<rect x="538" y="282" width="2" height="1"/>
<rect x="541" y="269" width="2" height="1"/>
<rect x="548" y="214" width="1" height="62"/>
<rect x="546" y="269" width="2" height="1"/>
<rect x="549" y="214" width="2" height="1"/>
<rect x="556" y="199" width="1" height="34"/>
<rect x="554" y="215" width="2" height="1"/>
<rect x="557" y="201" width="2" height="1"/>
<rect x="564" y="186" width="1" height="24"/>
<rect x="562" y="200" width="2" height="1"/>
<rect x="565" y="202" width="2" height="1"/>
<rect x="572" y="188" width="1" height="24"/>
<rect x="570" y="202" width="2" height="1"/>
<rect x="573" y="192" width="2" height="1"/>
<rect x="580" y="168" width="1" height="31"/>
<rect x="578" y="192" width="2" height="1"/>
<rect x="581" y="180" width="2" height="1"/>
<rect x="588" y="178" width="1" height="44"/>
<rect x="586" y="180" width="2" height="1"/>
<rect x="589" y="219" width="2" height="1"/>
<rect x="596" y="208" width="1" height="23"/>
<rect x="594" y="218" width="2" height="1"/>
<rect x="597" y="211" width="2" height="1"/>
<rect x="604" y="204" width="1" height="15"/>
<rect x="602" y="211" width="2" height="1"/>
<rect x="605" y="204" width="2" height="1"/>
<rect x="612" y="197" width="1" height="10"/>
<rect x="610" y="204" width="2" height="1"/>
<rect x="613" y="201" width="2" height="1"/>
<rect x="620" y="207" width="1" height="21"/>
<rect x="618" y="211" width="2" height="1"/>
<rect x="621" y="209" width="2" height="1"/>
<rect x="628" y="197" width="1" height="16"/>
<rect x="626" y="210" width="2" height="1"/>
<rect x="629" y="206" width="2" height="1"/>
<rect x="636" y="188" width="1" height="19"/>
<rect x="634" y="206" width="2" height="1"/>
<rect x="637" y="188" width="2" height="1"/>
<rect x="644" y="188" width="1" height="16"/>
<rect x="642" y="188" width="2" height="1"/>
<rect x="645" y="203" width="2" height="1"/>
<rect x="652" y="194" width="1" height="10"/>
<rect x="650" y="203" width="2" height="1"/>
<rect x="653" y="197" width="2" height="1"/>
<rect x="660" y="194" width="1" height="13"/>
<rect x="658" y="197" width="2" height="1"/>
<rect x="661" y="196" width="2" height="1"/>
<rect x="668" y="185" width="1" height="21"/>
<rect x="666" y="195" width="2" height="1"/>
<rect x="669" y="189" width="2" height="1"/>
<rect x="676" y="183" width="1" height="25"/>
<rect x="674" y="190" width="2" height="1"/>
<rect x="677" y="187" width="2" height="1"/>
<rect x="684" y="178" width="1" height="25"/>
<rect x="682" y="187" width="2" height="1"/>
<rect x="685" y="201" width="2" height="1"/>
<rect x="692" y="179" width="1" height="25"/>
<rect x="690" y="201" width="2" height="1"/>
<rect x="693" y="194" width="2" height="1"/>
<rect x="700" y="143" width="1" height="57"/>
<rect x="698" y="193" width="2" height="1"/>
<rect x="701" y="143" width="2" height="1"/>
<rect x="708" y="135" width="1" height="23"/>
<rect x="706" y="143" width="2" height="1"/>
<rect x="709" y="154" width="2" height="1"/>
<rect x="716" y="138" width="1" height="20"/>
<rect x="714" y="155" width="2" height="1"/>
<rect x="717" y="148" width="2" height="1"/>
<rect x="724" y="144" width="1" height="13"/>
<rect x="722" y="147" width="2" height="1"/>
<rect x="725" y="151" width="2" height="1"/>
<rect x="732" y="148" width="1" height="13"/>
<rect x="730" y="151" width="2" height="1"/>
<rect x="733" y="159" width="2" height="1"/>
<rect x="740" y="149" width="1" height="15"/>
<rect x="738" y="160" width="2" height="1"/>
<rect x="741" y="163" width="2" height="1"/>
<rect x="748" y="150" width="1" height="16"/>
<rect x="746" y="163" width="2" height="1"/>
<rect x="749" y="156" width="2" height="1"/>
<rect x="756" y="156" width="1" height="15"/>
<rect x="754" y="156" width="2" height="1"/>
<rect x="757" y="157" width="2" height="1"/>
<rect x="764" y="137" width="1" height="35"/>
<rect x="762" y="158" width="2" height="1"/>
<rect x="765" y="140" width="2" height="1"/>
<rect x="772" y="140" width="1" height="28"/>
<rect x="770" y="140" width="2" height="1"/>
<rect x="773" y="142" width="2" height="1"/>
<rect x="780" y="110" width="1" height="60"/>
<rect x="778" y="141" width="2" height="1"/>
<rect x="781" y="168" width="2" height="1"/>
<rect x="788" y="170" width="1" height="72"/>
<rect x="786" y="181" width="2" height="1"/>
<rect x="789" y="221" width="2" height="1"/>
<rect x="796" y="223" width="1" height="54"/>
<rect x="794" y="223" width="2" height="1"/>
<rect x="797" y="261" width="2" height="1"/>
<rect x="804" y="252" width="1" height="35"/>
<rect x="802" y="261" width="2" height="1"/>
<rect x="805" y="265" width="2" height="1"/>
<rect x="812" y="261" width="1" height="36"/>
<rect x="810" y="268" width="2" height="1"/>
<rect x="813" y="280" width="2" height="1"/>
<rect x="820" y="278" width="1" height="38"/>
<rect x="818" y="280" width="2" height="1"/>
<rect x="821" y="312" width="2" height="1"/>
<rect x="828" y="302" width="1" height="35"/>
<rect x="826" y="313" width="2" height="1"/>
<rect x="829" y="317" width="2" height="1"/>
<rect x="836" y="310" width="1" height="56"/>
<rect x="834" y="317" width="2" height="1"/>
<rect x="837" y="353" width="2" height="1"/>
<rect x="844" y="327" width="1" height="39"/>
<rect x="842" y="352" width="2" height="1"/>
<rect x="845" y="328" width="2" height="1"/>
<rect x="852" y="296" width="1" height="36"/>
<rect x="850" y="330" width="2" height="1"/>
<rect x="853" y="318" width="2" height="1"/>
<rect x="860" y="313" width="1" height="46"/>
<rect x="858" y="317" width="2" height="1"/>
<rect x="861" y="354" width="2" height="1"/>
<rect x="868" y="346" width="1" height="54"/>
<rect x="866" y="354" width="2" height="1"/>
<rect x="869" y="386" width="2" height="1"/>
<rect x="876" y="367" width="1" height="37"/>
<rect x="874" y="387" width="2" height="1"/>
<rect x="877" y="377" width="2" height="1"/>
<rect x="884" y="356" width="1" height="100"/>
<rect x="882" y="377" width="2" height="1"/>
<rect x="885" y="402" width="2" height="1"/>
<rect x="892" y="385" width="1" height="54"/>
<rect x="890" y="400" width="2" height="1"/>
<rect x="893" y="396" width="2" height="1"/>
<rect x="900" y="393" width="1" height="83"/>
<rect x="898" y="395" width="2" height="1"/>
<rect x="901" y="443" width="2" height="1"/>
<rect x="908" y="442" width="1" height="57"/>
<rect x="906" y="443" width="2" height="1"/>
<rect x="909" y="490" width="2" height="1"/>
<rect x="916" y="463" width="1" height="40"/>
<rect x="914" y="490" width="2" height="1"/>
<rect x="917" y="464" width="2" height="1"/>
<rect x="924" y="434" width="1" height="32"/>
<rect x="922" y="463" width="2" height="1"/>
<rect x="925" y="453" width="2" height="1"/>
<rect x="932" y="452" width="1" height="49"/>
<rect x="930" y="453" width="2" height="1"/>
<rect x="933" y="489" width="2" height="1"/>
<rect x="940" y="465" width="1" height="25"/>
<rect x="938" y="488" width="2" height="1"/>
<rect x="941" y="477" width="2" height="1"/>
<rect x="948" y="462" width="1" height="25"/>
<rect x="946" y="477" width="2" height="1"/>
<rect x="949" y="481" width="2" height="1"/>
<rect x="956" y="473" width="1" height="25"/>
<rect x="954" y="482" width="2" height="1"/>
<rect x="957" y="479" width="2" height="1"/>
<rect x="964" y="477" width="1" height="19"/>
<rect x="962" y="479" width="2" height="1"/>
<rect x="965" y="483" width="2" height="1"/>
<rect x="972" y="473" width="1" height="15"/>
<rect x="970" y="484" width="2" height="1"/>
<rect x="973" y="479" width="2" height="1"/>
<rect x="980" y="464" width="1" height="21"/>
<rect x="978" y="478" width="2" height="1"/>
<rect x="981" y="471" width="2" height="1"/>
<rect x="988" y="461" width="1" height="12"/>
<rect x="986" y="471" width="2" height="1"/>
<rect x="989" y="467" width="2" height="1"/>
<rect x="996" y="467" width="1" height="15"/>
<rect x="994" y="467" width="2" height="1"/>
<rect x="997" y="474" width="2" height="1"/>
<rect x="1004" y="467" width="1" height="28"/>
<rect x="1002" y="479" width="2" height="1"/>
<rect x="1005" y="472" width="2" height="1"/>
<rect x="1012" y="468" width="1" height="12"/>
<rect x="1010" y="472" width="2" height="1"/>
<rect x="1013" y="474" width="2" height="1"/>
<rect x="1020" y="470" width="1" height="9"/>
<rect x="1018" y="476" width="2" height="1"/>
<rect x="1021" y="472" width="2" height="1"/>
<rect x="1028" y="464" width="1" height="10"/>
<rect x="1026" y="472" width="2" height="1"/>
<rect x="1029" y="465" width="2" height="1"/>
<rect x="1036" y="461" width="1" height="8"/>
<rect x="1034" y="465" width="2" height="1"/>
<rect x="1037" y="467" width="2" height="1"/>
<rect x="1044" y="459" width="1" height="13"/>
<rect x="1042" y="467" width="2" height="1"/>
<rect x="1045" y="459" width="2" height="1"/>
<rect x="1052" y="449" width="1" height="16"/>
<rect x="1050" y="459" width="2" height="1"/>
<rect x="1053" y="451" width="2" height="1"/>
<rect x="1060" y="446" width="1" height="33"/>
<rect x="1058" y="450" width="2" height="1"/>
<rect x="1061" y="468" width="2" height="1"/>
<rect x="1068" y="449" width="1" height="20"/>
<rect x="1066" y="467" width="2" height="1"/>
<rect x="1069" y="465" width="2" height="1"/>
<rect x="1076" y="457" width="1" height="14"/>
<rect x="1074" y="465" width="2" height="1"/>
<rect x="1077" y="461" width="2" height="1"/>
<rect x="1084" y="442" width="1" height="19"/>
<rect x="1082" y="460" width="2" height="1"/>
<rect x="1085" y="443" width="2" height="1"/>
<rect x="1092" y="425" width="1" height="25"/>
<rect x="1090" y="443" width="2" height="1"/>
<rect x="1093" y="429" width="2" height="1"/>
<rect x="1100" y="424" width="1" height="12"/>
<rect x="1098" y="429" width="2" height="1"/>
<rect x="1101" y="431" width="2" height="1"/>
<rect x="1108" y="424" width="1" height="11"/>
<rect x="1106" y="432" width="2" height="1"/>
<rect x="1109" y="434" width="2" height="1"/>
<rect x="1116" y="431" width="1" height="8"/>
<rect x="1114" y="434" width="2" height="1"/>
<rect x="1117" y="434" width="2" height="1"/>
<rect x="1124" y="419" width="1" height="17"/>
<rect x="1122" y="434" width="2" height="1"/>
<rect x="1125" y="420" width="2" height="1"/>
<rect x="1132" y="418" width="1" height="20"/>
<rect x="1130" y="420" width="2" height="1"/>
<rect x="1133" y="436" width="2" height="1"/>
<rect x="1140" y="434" width="1" height="17"/>
<rect x="1138" y="437" width="2" height="1"/>
<rect x="1141" y="438" width="2" height="1"/>
<rect x="1148" y="428" width="1" height="32"/>
<rect x="1146" y="438" width="2" height="1"/>
<rect x="1149" y="429" width="2" height="1"/>
<rect x="1156" y="429" width="1" height="40"/>
<rect x="1154" y="429" width="2" height="1"/>
<rect x="1157" y="468" width="2" height="1"/>
<rect x="1164" y="468" width="1" height="51"/>
<rect x="1162" y="468" width="2" height="1"/>
<rect x="1165" y="504" width="2" height="1"/>
<rect x="1172" y="480" width="1" height="29"/>
<rect x="1170" y="503" width="2" height="1"/>
<rect x="1173" y="487" width="2" height="1"/>
<rect x="1180" y="453" width="1" height="40"/>
<rect x="1178" y="487" width="2" height="1"/>
<rect x="1181" y="470" width="2" height="1"/>
<rect x="1188" y="459" width="1" height="42"/>
<rect x="1186" y="468" width="2" height="1"/>
<rect x="1189" y="494" width="2" height="1"/>
<rect x="1196" y="494" width="1" height="67"/>
<rect x="1194" y="494" width="2" height="1"/>
<rect x="1197" y="557" width="2" height="1"/>
<rect x="1204" y="531" width="1" height="28"/>
<rect x="1202" y="556" width="2" height="1"/>
<rect x="1205" y="551" width="2" height="1"/>
<rect x="1212" y="528" width="1" height="35"/>
<rect x="1210" y="550" width="2" height="1"/>
<rect x="1213" y="532" width="2" height="1"/>
<rect x="1220" y="522" width="1" height="24"/>
<rect x="1218" y="532" width="2" height="1"/>
<rect x="1221" y="532" width="2" height="1"/>
<rect x="1228" y="523" width="1" height="22"/>
<rect x="1226" y="532" width="2" height="1"/>
<rect x="1229" y="525" width="2" height="1"/>
<rect x="1236" y="516" width="1" height="33"/>
<rect x="1234" y="525" width="2" height="1"/>
<rect x="1237" y="537" width="2" height="1"/>
<rect x="1244" y="514" width="1" height="35"/>
<rect x="1242" y="537" width="2" height="1"/>
<rect x="1245" y="544" width="2" height="1"/>
<rect x="1252" y="513" width="1" height="36"/>
<rect x="1250" y="543" width="2" height="1"/>
<rect x="1253" y="530" width="2" height="1"/>
<rect x="1260" y="502" width="1" height="41"/>
<rect x="1258" y="530" width="2" height="1"/>
<rect x="1261" y="541" width="2" height="1"/>
<rect x="1268" y="508" width="1" height="51"/>
<rect x="1266" y="540" width="2" height="1"/>
<rect x="1269" y="509" width="2" height="1"/>
<rect x="1276" y="510" width="1" height="45"/>
<rect x="1274" y="510" width="2" height="1"/>
<rect x="1277" y="521" width="2" height="1"/>
<rect x="1284" y="472" width="1" height="51"/>
<rect x="1282" y="520" width="2" height="1"/>
<rect x="1285" y="495" width="2" height="1"/>
<rect x="1292" y="464" width="1" height="36"/>
<rect x="1290" y="494" width="2" height="1"/>
<rect x="1293" y="475" width="2" height="1"/>
<rect x="1300" y="457" width="1" height="46"/>
<rect x="1298" y="475" width="2" height="1"/>
<rect x="1301" y="502" width="2" height="1"/>
<rect x="1308" y="500" width="1" height="19"/>
<rect x="1306" y="502" width="2" height="1"/>
<rect x="1309" y="506" width="2" height="1"/>
<rect x="1316" y="491" width="1" height="55"/>
<rect x="1314" y="505" width="2" height="1"/>
<rect x="1317" y="531" width="2" height="1"/>
<rect x="1324" y="524" width="1" height="28"/>
<rect x="1322" y="531" width="2" height="1"/>
<rect x="1325" y="551" width="2" height="1"/>
<rect x="1332" y="541" width="1" height="22"/>
<rect x="1330" y="552" width="2" height="1"/>
<rect x="1333" y="543" width="2" height="1"/>
<rect x="1340" y="535" width="1" height="17"/>
<rect x="1338" y="543" width="2" height="1"/>
<rect x="1341" y="545" width="2" height="1"/>
<rect x="1348" y="536" width="1" height="27"/>
<rect x="1346" y="546" width="2" height="1"/>
<rect x="1349" y="560" width="2" height="1"/>
<rect x="1356" y="547" width="1" height="16"/>
<rect x="1354" y="558" width="2" height="1"/>
<rect x="1357" y="551" width="2" height="1"/>
<rect x="1364" y="548" width="1" height="14"/>
<rect x="1362" y="551" width="2" height="1"/>
<rect x="1365" y="555" width="2" height="1"/>
<rect x="1372" y="548" width="1" height="14"/>
<rect x="1370" y="555" width="2" height="1"/>
<rect x="1373" y="560" width="2" height="1"/>
<rect x="1380" y="558" width="1" height="5"/>
<rect x="1378" y="560" width="2" height="1"/>
<rect x="1381" y="561" width="2" height="1"/>
<rect x="1388" y="553" width="1" height="16"/>
<rect x="1386" y="561" width="2" height="1"/>
<rect x="1389" y="561" width="2" height="1"/>
<rect x="1396" y="555" width="1" height="8"/>
<rect x="1394" y="561" width="2" height="1"/>
<rect x="1397" y="556" width="2" height="1"/>
<rect x="1404" y="555" width="1" height="13"/>
<rect x="1402" y="555" width="2" height="1"/>
<rect x="1405" y="556" width="2" height="1"/>
<rect x="1412" y="557" width="1" height="8"/>
<rect x="1410" y="558" width="2" height="1"/>
<rect x="1413" y="564" width="2" height="1"/>
<rect x="1420" y="562" width="1" height="21"/>
<rect x="1418" y="564" width="2" height="1"/>
<rect x="1421" y="573" width="2" height="1"/>
<rect x="1428" y="558" width="1" height="16"/>
<rect x="1426" y="573" width="2" height="1"/>
<rect x="1429" y="561" width="2" height="1"/>
<rect x="1436" y="550" width="1" height="24"/>
<rect x="1434" y="560" width="2" height="1"/>
<rect x="1437" y="565" width="2" height="1"/>
<rect x="1444" y="560" width="1" height="31"/>
<rect x="1442" y="565" width="2" height="1"/>
<rect x="1445" y="584" width="2" height="1"/>
<rect x="1452" y="578" width="1" height="18"/>
<rect x="1450" y="584" width="2" height="1"/>
<rect x="1453" y="585" width="2" height="1"/>
<rect x="1460" y="579" width="1" height="25"/>
<rect x="1458" y="585" width="2" height="1"/>
<rect x="1461" y="600" width="2" height="1"/>
<rect x="1468" y="596" width="1" height="45"/>
<rect x="1466" y="599" width="2" height="1"/>
<rect x="1469" y="628" width="2" height="1"/>
<rect x="1476" y="618" width="1" height="18"/>
<rect x="1474" y="628" width="2" height="1"/>
<rect x="1477" y="634" width="2" height="1"/>
<rect x="1484" y="626" width="1" height="16"/>
<rect x="1482" y="634" width="2" height="1"/>
<rect x="1485" y="641" width="2" height="1"/>
</g>
<text transform="translate(8,672) scale(0.9569,1)" fill="#fff" font-family="Liberation Sans, sans-serif" font-size="9.75px" shape-rendering="auto" xml:space="preserve" textLength="816.2" lengthAdjust="spacing">rex o1 M30 Rex of Ahrens (17 5) 0.0000 -0.0001 -0.0003 -0.0003 -0.0003 -0.0003 -0.0003 -0.0003 -0.0003  M30 Awesome of EMA -0.0015 -0.0015  M30 Awesome of EMA -0.0015 -0.0015</text>
<g clip-path="url(#cs)">
<polyline points="-3.5,819.3 4.5,828.7 12.5,838.9 20.5,842.5 28.5,810.7 36.5,814.6 44.5,830.3 52.5,815.4 60.5,823.2 68.5,829.5 76.5,817.7 84.5,824.8 92.5,856.6 100.5,834.2 108.5,840.5 116.5,860.5 124.5,853.8 132.5,856.1 140.5,839.2 148.5,843.6 156.5,849.4 164.5,840.5 172.5,831.8 180.5,833.7 188.5,847.1 196.5,840.9 204.5,842.0 212.5,838.9 220.5,838.9 228.5,832.6 236.5,825.6 244.5,832.6 252.5,839.2 260.5,833.7 268.5,830.6 276.5,835.8 284.5,842.5 292.5,838.1 300.5,844.1 308.5,844.1 316.5,845.6 324.5,860.1 332.5,854.6 340.5,857.7 348.5,859.3 356.5,853.8 364.5,851.0 372.5,851.0 380.5,849.9 388.5,840.5 396.5,829.5 404.5,805.2 412.5,797.9 420.5,798.6 428.5,776.6 436.5,815.0 444.5,807.5 452.5,789.2 460.5,782.1 468.5,795.5 476.5,769.1 484.5,778.2 492.5,798.6 500.5,781.3 508.5,746.7 516.5,737.3 524.5,723.1 532.5,712.9 540.5,706.6 548.5,682.2 556.5,675.2 564.5,683.8 572.5,680.7 580.5,680.4 588.5,707.4 596.5,706.6 604.5,705.5 612.5,709.0 620.5,710.1 628.5,713.2 636.5,708.2 644.5,722.4 652.5,725.5 660.5,728.2 668.5,729.7 676.5,731.0 684.5,746.0 692.5,754.9 700.5,732.9 708.5,748.3 716.5,751.8 724.5,759.3 732.5,769.5 740.5,779.0 748.5,782.1 756.5,784.2 764.5,776.9 772.5,776.3 780.5,800.5 788.5,820.9 796.5,843.6 804.5,844.9 812.5,850.7 820.5,869.5 828.5,869.5 836.5,888.3 844.5,873.9 852.5,873.9 860.5,893.8 868.5,909.4 876.5,900.8 884.5,904.3 892.5,895.3 900.5,913.4 908.5,933.4 916.5,913.4 924.5,911.5 932.5,922.8 940.5,917.3 948.5,918.4 956.5,911.0 964.5,907.1 972.5,900.8 980.5,893.0 988.5,889.4 996.5,887.5 1004.5,876.2 1012.5,873.9 1020.5,867.1 1028.5,860.5 1036.5,859.7 1044.5,850.7 1052.5,842.8 1060.5,847.5 1068.5,846.7 1076.5,839.7 1084.5,827.9 1092.5,817.0 1100.5,817.0 1108.5,817.3 1116.5,815.4 1124.5,806.4 1132.5,814.7 1140.5,811.8 1148.5,800.6 1156.5,821.3 1164.5,836.1 1172.5,827.5 1180.5,819.4 1188.5,834.6 1196.5,866.7 1204.5,866.7 1212.5,854.2 1220.5,852.3 1228.5,845.5 1236.5,852.6 1244.5,860.1 1252.5,855.0 1260.5,868.0 1268.5,844.4 1276.5,842.9 1284.5,834.3 1292.5,825.2 1300.5,844.0 1308.5,842.9 1316.5,854.2 1324.5,868.3 1332.5,858.6 1340.5,857.6 1348.5,866.4 1356.5,859.7 1364.5,860.1 1372.5,862.0 1380.5,861.0 1388.5,860.2 1396.5,854.8 1404.5,851.1 1412.5,852.9 1420.5,855.1 1428.5,848.9 1436.5,849.6 1444.5,858.8 1452.5,856.5 1460.5,864.7 1468.5,875.0 1476.5,877.9 1484.5,880.9" fill="none" stroke="#6c6c6c" stroke-width="2.7" stroke-linejoin="round" shape-rendering="auto"/>
<polyline points="-3.5,819.3 4.5,828.7 12.5,838.9 20.5,842.5" fill="none" stroke="#3a4a4a" stroke-width="5" stroke-linejoin="round" stroke-linecap="butt" shape-rendering="auto"/>
<polyline points="36.5,814.6 44.5,830.3" fill="none" stroke="#3a4a4a" stroke-width="5" stroke-linejoin="round" stroke-linecap="butt" shape-rendering="auto"/>
<polyline points="52.5,815.4 60.5,823.2 68.5,829.5" fill="none" stroke="#3a4a4a" stroke-width="5" stroke-linejoin="round" stroke-linecap="butt" shape-rendering="auto"/>
<polyline points="84.5,824.8 92.5,856.6" fill="none" stroke="#3a4a4a" stroke-width="5" stroke-linejoin="round" stroke-linecap="butt" shape-rendering="auto"/>
<polyline points="100.5,834.2 108.5,840.5 116.5,860.5 124.5,853.8 132.5,856.1" fill="none" stroke="#3a4a4a" stroke-width="5" stroke-linejoin="round" stroke-linecap="butt" shape-rendering="auto"/>
<polyline points="140.5,839.2 148.5,843.6 156.5,849.4" fill="none" stroke="#3a4a4a" stroke-width="5" stroke-linejoin="round" stroke-linecap="butt" shape-rendering="auto"/>
<polyline points="316.5,845.6 324.5,860.1 332.5,854.6 340.5,857.7 348.5,859.3 356.5,853.8" fill="none" stroke="#3a4a4a" stroke-width="5" stroke-linejoin="round" stroke-linecap="butt" shape-rendering="auto"/>
<polyline points="388.5,840.5 396.5,829.5 404.5,805.2 412.5,797.9 420.5,798.6 428.5,776.6" fill="none" stroke="#3a4a4a" stroke-width="5" stroke-linejoin="round" stroke-linecap="butt" shape-rendering="auto"/>
<polyline points="444.5,807.5 452.5,789.2 460.5,782.1" fill="none" stroke="#3a4a4a" stroke-width="5" stroke-linejoin="round" stroke-linecap="butt" shape-rendering="auto"/>
<polyline points="468.5,795.5 476.5,769.1 484.5,778.2" fill="none" stroke="#3a4a4a" stroke-width="5" stroke-linejoin="round" stroke-linecap="butt" shape-rendering="auto"/>
<polyline points="492.5,798.6 500.5,781.3 508.5,746.7 516.5,737.3 524.5,723.1 532.5,712.9 540.5,706.6 548.5,682.2 556.5,675.2 564.5,683.8 572.5,680.7 580.5,680.4 588.5,707.4 596.5,706.6 604.5,705.5 612.5,709.0 620.5,710.1" fill="none" stroke="#3a4a4a" stroke-width="5" stroke-linejoin="round" stroke-linecap="butt" shape-rendering="auto"/>
<polyline points="628.5,713.2 636.5,708.2" fill="none" stroke="#3a4a4a" stroke-width="5" stroke-linejoin="round" stroke-linecap="butt" shape-rendering="auto"/>
<polyline points="732.5,769.5 740.5,779.0 748.5,782.1 756.5,784.2 764.5,776.9 772.5,776.3 780.5,800.5 788.5,820.9 796.5,843.6 804.5,844.9 812.5,850.7 820.5,869.5 828.5,869.5 836.5,888.3 844.5,873.9 852.5,873.9 860.5,893.8 868.5,909.4 876.5,900.8 884.5,904.3 892.5,895.3 900.5,913.4 908.5,933.4 916.5,913.4 924.5,911.5 932.5,922.8 940.5,917.3 948.5,918.4 956.5,911.0 964.5,907.1 972.5,900.8" fill="none" stroke="#3a4a4a" stroke-width="5" stroke-linejoin="round" stroke-linecap="butt" shape-rendering="auto"/>
<polyline points="1060.5,847.5 1068.5,846.7 1076.5,839.7 1084.5,827.9 1092.5,817.0 1100.5,817.0 1108.5,817.3 1116.5,815.4 1124.5,806.4 1132.5,814.7 1140.5,811.8 1148.5,800.6 1156.5,821.3" fill="none" stroke="#3a4a4a" stroke-width="5" stroke-linejoin="round" stroke-linecap="butt" shape-rendering="auto"/>
<polyline points="1164.5,836.1 1172.5,827.5 1180.5,819.4" fill="none" stroke="#3a4a4a" stroke-width="5" stroke-linejoin="round" stroke-linecap="butt" shape-rendering="auto"/>
<polyline points="1308.5,842.9 1316.5,854.2 1324.5,868.3 1332.5,858.6 1340.5,857.6 1348.5,866.4 1356.5,859.7 1364.5,860.1 1372.5,862.0 1380.5,861.0 1388.5,860.2 1396.5,854.8" fill="none" stroke="#3a4a4a" stroke-width="5" stroke-linejoin="round" stroke-linecap="butt" shape-rendering="auto"/>
<polyline points="1412.5,852.9 1420.5,855.1" fill="none" stroke="#3a4a4a" stroke-width="5" stroke-linejoin="round" stroke-linecap="butt" shape-rendering="auto"/>
<polyline points="1436.5,849.6 1444.5,858.8" fill="none" stroke="#3a4a4a" stroke-width="5" stroke-linejoin="round" stroke-linecap="butt" shape-rendering="auto"/>
<polyline points="1452.5,856.5 1460.5,864.7 1468.5,875.0 1476.5,877.9 1484.5,880.9" fill="none" stroke="#3a4a4a" stroke-width="5" stroke-linejoin="round" stroke-linecap="butt" shape-rendering="auto"/>
<polyline points="-3.5,819.3 4.5,828.7 12.5,838.9 20.5,842.5" fill="none" stroke="#ff00ff" stroke-width="3.2" stroke-linejoin="round" stroke-linecap="butt" shape-rendering="auto"/>
<polyline points="36.5,814.6 44.5,830.3" fill="none" stroke="#ff00ff" stroke-width="3.2" stroke-linejoin="round" stroke-linecap="butt" shape-rendering="auto"/>
<polyline points="52.5,815.4 60.5,823.2 68.5,829.5" fill="none" stroke="#ff00ff" stroke-width="3.2" stroke-linejoin="round" stroke-linecap="butt" shape-rendering="auto"/>
<polyline points="84.5,824.8 92.5,856.6" fill="none" stroke="#ff00ff" stroke-width="3.2" stroke-linejoin="round" stroke-linecap="butt" shape-rendering="auto"/>
<polyline points="100.5,834.2 108.5,840.5 116.5,860.5 124.5,853.8 132.5,856.1" fill="none" stroke="#ff00ff" stroke-width="3.2" stroke-linejoin="round" stroke-linecap="butt" shape-rendering="auto"/>
<polyline points="140.5,839.2 148.5,843.6 156.5,849.4" fill="none" stroke="#ff00ff" stroke-width="3.2" stroke-linejoin="round" stroke-linecap="butt" shape-rendering="auto"/>
<polyline points="316.5,845.6 324.5,860.1 332.5,854.6 340.5,857.7 348.5,859.3 356.5,853.8" fill="none" stroke="#ff00ff" stroke-width="3.2" stroke-linejoin="round" stroke-linecap="butt" shape-rendering="auto"/>
<polyline points="388.5,840.5 396.5,829.5 404.5,805.2 412.5,797.9 420.5,798.6 428.5,776.6" fill="none" stroke="#00ffff" stroke-width="3.2" stroke-linejoin="round" stroke-linecap="butt" shape-rendering="auto"/>
<polyline points="444.5,807.5 452.5,789.2 460.5,782.1" fill="none" stroke="#00ffff" stroke-width="3.2" stroke-linejoin="round" stroke-linecap="butt" shape-rendering="auto"/>
<polyline points="468.5,795.5 476.5,769.1 484.5,778.2" fill="none" stroke="#00ffff" stroke-width="3.2" stroke-linejoin="round" stroke-linecap="butt" shape-rendering="auto"/>
<polyline points="492.5,798.6 500.5,781.3 508.5,746.7 516.5,737.3 524.5,723.1 532.5,712.9 540.5,706.6 548.5,682.2 556.5,675.2 564.5,683.8 572.5,680.7 580.5,680.4 588.5,707.4 596.5,706.6 604.5,705.5 612.5,709.0 620.5,710.1" fill="none" stroke="#00ffff" stroke-width="3.2" stroke-linejoin="round" stroke-linecap="butt" shape-rendering="auto"/>
<polyline points="628.5,713.2 636.5,708.2" fill="none" stroke="#00ffff" stroke-width="3.2" stroke-linejoin="round" stroke-linecap="butt" shape-rendering="auto"/>
<polyline points="732.5,769.5 740.5,779.0 748.5,782.1 756.5,784.2 764.5,776.9 772.5,776.3 780.5,800.5 788.5,820.9 796.5,843.6 804.5,844.9 812.5,850.7 820.5,869.5 828.5,869.5 836.5,888.3 844.5,873.9 852.5,873.9 860.5,893.8 868.5,909.4 876.5,900.8 884.5,904.3 892.5,895.3 900.5,913.4 908.5,933.4 916.5,913.4 924.5,911.5 932.5,922.8 940.5,917.3 948.5,918.4 956.5,911.0 964.5,907.1 972.5,900.8" fill="none" stroke="#ff00ff" stroke-width="3.2" stroke-linejoin="round" stroke-linecap="butt" shape-rendering="auto"/>
<polyline points="1060.5,847.5 1068.5,846.7 1076.5,839.7 1084.5,827.9 1092.5,817.0 1100.5,817.0 1108.5,817.3 1116.5,815.4 1124.5,806.4 1132.5,814.7 1140.5,811.8 1148.5,800.6 1156.5,821.3" fill="none" stroke="#00ffff" stroke-width="3.2" stroke-linejoin="round" stroke-linecap="butt" shape-rendering="auto"/>
<polyline points="1164.5,836.1 1172.5,827.5 1180.5,819.4" fill="none" stroke="#00ffff" stroke-width="3.2" stroke-linejoin="round" stroke-linecap="butt" shape-rendering="auto"/>
<polyline points="1308.5,842.9 1316.5,854.2 1324.5,868.3 1332.5,858.6 1340.5,857.6 1348.5,866.4 1356.5,859.7 1364.5,860.1 1372.5,862.0 1380.5,861.0 1388.5,860.2 1396.5,854.8" fill="none" stroke="#ff00ff" stroke-width="3.2" stroke-linejoin="round" stroke-linecap="butt" shape-rendering="auto"/>
<polyline points="1412.5,852.9 1420.5,855.1" fill="none" stroke="#ff00ff" stroke-width="3.2" stroke-linejoin="round" stroke-linecap="butt" shape-rendering="auto"/>
<polyline points="1436.5,849.6 1444.5,858.8" fill="none" stroke="#ff00ff" stroke-width="3.2" stroke-linejoin="round" stroke-linecap="butt" shape-rendering="auto"/>
<polyline points="1452.5,856.5 1460.5,864.7 1468.5,875.0 1476.5,877.9 1484.5,880.9" fill="none" stroke="#ff00ff" stroke-width="3.2" stroke-linejoin="round" stroke-linecap="butt" shape-rendering="auto"/>
<rect x="11" y="660" width="3" height="4" fill="#ff0000"/>
<rect x="11" y="945" width="3" height="1" fill="#ff0000"/>
<rect x="19" y="660" width="3" height="8" fill="#ff0000"/>
<rect x="19" y="945" width="3" height="1" fill="#ff0000"/>
<rect x="307" y="660" width="3" height="2" fill="#ff0000"/>
<rect x="307" y="945" width="3" height="1" fill="#ff0000"/>
<rect x="315" y="660" width="3" height="10" fill="#ff0000"/>
<rect x="315" y="945" width="3" height="1" fill="#ff0000"/>
<rect x="323" y="660" width="3" height="28" fill="#ff0000"/>
<rect x="323" y="945" width="3" height="1" fill="#ff0000"/>
<rect x="331" y="660" width="3" height="37" fill="#ff0000"/>
<rect x="331" y="945" width="3" height="1" fill="#ff0000"/>
<rect x="339" y="660" width="3" height="44" fill="#ff0000"/>
<rect x="339" y="945" width="3" height="1" fill="#ff0000"/>
<rect x="347" y="660" width="3" height="50" fill="#ff0000"/>
<rect x="347" y="945" width="3" height="1" fill="#ff0000"/>
<rect x="355" y="660" width="3" height="51" fill="#ff0000"/>
<rect x="355" y="945" width="3" height="1" fill="#ff0000"/>
<rect x="363" y="660" width="3" height="49" fill="#db7093"/>
<rect x="363" y="945" width="3" height="1" fill="#db7093"/>
<rect x="371" y="660" width="3" height="47" fill="#db7093"/>
<rect x="371" y="945" width="3" height="1" fill="#db7093"/>
<rect x="379" y="660" width="3" height="47" fill="#db7093"/>
<rect x="379" y="945" width="3" height="1" fill="#db7093"/>
<rect x="387" y="660" width="3" height="37" fill="#db7093"/>
<rect x="387" y="945" width="3" height="1" fill="#db7093"/>
<rect x="395" y="660" width="3" height="26" fill="#db7093"/>
<rect x="395" y="945" width="3" height="1" fill="#db7093"/>
<rect x="819" y="660" width="3" height="37" fill="#ff0000"/>
<rect x="819" y="945" width="3" height="1" fill="#ff0000"/>
<rect x="827" y="660" width="3" height="65" fill="#ff0000"/>
<rect x="827" y="945" width="3" height="1" fill="#ff0000"/>
<rect x="835" y="660" width="3" height="100" fill="#ff0000"/>
<rect x="835" y="945" width="3" height="1" fill="#ff0000"/>
<rect x="843" y="660" width="3" height="114" fill="#ff0000"/>
<rect x="843" y="945" width="3" height="1" fill="#ff0000"/>
<rect x="851" y="660" width="3" height="119" fill="#ff0000"/>
<rect x="851" y="945" width="3" height="1" fill="#ff0000"/>
<rect x="859" y="660" width="3" height="136" fill="#ff0000"/>
<rect x="859" y="945" width="3" height="1" fill="#ff0000"/>
<rect x="867" y="660" width="3" height="160" fill="#ff0000"/>
<rect x="867" y="945" width="3" height="1" fill="#ff0000"/>
<rect x="875" y="660" width="3" height="171" fill="#ff0000"/>
<rect x="875" y="945" width="3" height="1" fill="#ff0000"/>
<rect x="883" y="660" width="3" height="188" fill="#ff0000"/>
<rect x="883" y="945" width="3" height="1" fill="#ff0000"/>
<rect x="891" y="660" width="3" height="196" fill="#ff0000"/>
<rect x="891" y="945" width="3" height="1" fill="#ff0000"/>
<rect x="899" y="660" width="3" height="218" fill="#ff0000"/>
<rect x="899" y="945" width="3" height="1" fill="#ff0000"/>
<rect x="907" y="660" width="3" height="251" fill="#ff0000"/>
<rect x="907" y="945" width="3" height="1" fill="#ff0000"/>
<rect x="915" y="660" width="3" height="262" fill="#ff0000"/>
<rect x="915" y="945" width="3" height="1" fill="#ff0000"/>
<rect x="923" y="660" width="3" height="261" fill="#db7093"/>
<rect x="923" y="945" width="3" height="1" fill="#db7093"/>
<rect x="931" y="660" width="3" height="273" fill="#ff0000"/>
<rect x="931" y="945" width="3" height="1" fill="#ff0000"/>
<rect x="939" y="660" width="3" height="273" fill="#ff0000"/>
<rect x="939" y="945" width="3" height="1" fill="#ff0000"/>
<rect x="947" y="660" width="3" height="271" fill="#db7093"/>
<rect x="947" y="945" width="3" height="1" fill="#db7093"/>
<rect x="955" y="660" width="3" height="266" fill="#db7093"/>
<rect x="955" y="945" width="3" height="1" fill="#db7093"/>
<rect x="963" y="660" width="3" height="260" fill="#db7093"/>
<rect x="963" y="945" width="3" height="1" fill="#db7093"/>
<rect x="971" y="660" width="3" height="251" fill="#db7093"/>
<rect x="971" y="945" width="3" height="1" fill="#db7093"/>
<rect x="979" y="660" width="3" height="237" fill="#db7093"/>
<rect x="979" y="945" width="3" height="1" fill="#db7093"/>
<rect x="987" y="660" width="3" height="223" fill="#db7093"/>
<rect x="987" y="945" width="3" height="1" fill="#db7093"/>
<rect x="995" y="660" width="3" height="213" fill="#db7093"/>
<rect x="995" y="945" width="3" height="1" fill="#db7093"/>
<rect x="1003" y="660" width="3" height="201" fill="#db7093"/>
<rect x="1003" y="945" width="3" height="1" fill="#db7093"/>
<rect x="1011" y="660" width="3" height="192" fill="#db7093"/>
<rect x="1011" y="945" width="3" height="1" fill="#db7093"/>
<rect x="1019" y="660" width="3" height="181" fill="#db7093"/>
<rect x="1019" y="945" width="3" height="1" fill="#db7093"/>
<rect x="1027" y="660" width="3" height="168" fill="#db7093"/>
<rect x="1027" y="945" width="3" height="1" fill="#db7093"/>
<rect x="1035" y="660" width="3" height="158" fill="#db7093"/>
<rect x="1035" y="945" width="3" height="1" fill="#db7093"/>
<rect x="1043" y="660" width="3" height="145" fill="#db7093"/>
<rect x="1043" y="945" width="3" height="1" fill="#db7093"/>
<rect x="1051" y="660" width="3" height="130" fill="#db7093"/>
<rect x="1051" y="945" width="3" height="1" fill="#db7093"/>
<rect x="1059" y="660" width="3" height="124" fill="#db7093"/>
<rect x="1059" y="945" width="3" height="1" fill="#db7093"/>
<rect x="1067" y="660" width="3" height="117" fill="#db7093"/>
<rect x="1067" y="945" width="3" height="1" fill="#db7093"/>
<rect x="1075" y="660" width="3" height="109" fill="#db7093"/>
<rect x="1075" y="945" width="3" height="1" fill="#db7093"/>
<rect x="1083" y="660" width="3" height="95" fill="#db7093"/>
<rect x="1083" y="945" width="3" height="1" fill="#db7093"/>
<rect x="1091" y="660" width="3" height="77" fill="#db7093"/>
<rect x="1091" y="945" width="3" height="1" fill="#db7093"/>
<rect x="1099" y="660" width="3" height="64" fill="#db7093"/>
<rect x="1099" y="945" width="3" height="1" fill="#db7093"/>
<rect x="1107" y="660" width="3" height="55" fill="#db7093"/>
<rect x="1107" y="945" width="3" height="1" fill="#db7093"/>
<rect x="1115" y="660" width="3" height="47" fill="#db7093"/>
<rect x="1115" y="945" width="3" height="1" fill="#db7093"/>
<rect x="1123" y="660" width="3" height="35" fill="#db7093"/>
<rect x="1123" y="945" width="3" height="1" fill="#db7093"/>
<rect x="1131" y="660" width="3" height="33" fill="#db7093"/>
<rect x="1131" y="945" width="3" height="1" fill="#db7093"/>
<rect x="1139" y="660" width="3" height="31" fill="#db7093"/>
<rect x="1139" y="945" width="3" height="1" fill="#db7093"/>
<rect x="1147" y="660" width="3" height="26" fill="#db7093"/>
<rect x="1147" y="945" width="3" height="1" fill="#db7093"/>
<rect x="1155" y="660" width="3" height="38" fill="#ff0000"/>
<rect x="1155" y="945" width="3" height="1" fill="#ff0000"/>
<rect x="1163" y="660" width="3" height="62" fill="#ff0000"/>
<rect x="1163" y="945" width="3" height="1" fill="#ff0000"/>
<rect x="1171" y="660" width="3" height="71" fill="#ff0000"/>
<rect x="1171" y="945" width="3" height="1" fill="#ff0000"/>
<rect x="1179" y="660" width="3" height="70" fill="#db7093"/>
<rect x="1179" y="945" width="3" height="1" fill="#db7093"/>
<rect x="1187" y="660" width="3" height="78" fill="#ff0000"/>
<rect x="1187" y="945" width="3" height="1" fill="#ff0000"/>
<rect x="1195" y="660" width="3" height="109" fill="#ff0000"/>
<rect x="1195" y="945" width="3" height="1" fill="#ff0000"/>
<rect x="1203" y="660" width="3" height="128" fill="#ff0000"/>
<rect x="1203" y="945" width="3" height="1" fill="#ff0000"/>
<rect x="1211" y="660" width="3" height="132" fill="#ff0000"/>
<rect x="1211" y="945" width="3" height="1" fill="#ff0000"/>
<rect x="1219" y="660" width="3" height="134" fill="#ff0000"/>
<rect x="1219" y="945" width="3" height="1" fill="#ff0000"/>
<rect x="1227" y="660" width="3" height="131" fill="#db7093"/>
<rect x="1227" y="945" width="3" height="1" fill="#db7093"/>
<rect x="1235" y="660" width="3" height="132" fill="#ff0000"/>
<rect x="1235" y="945" width="3" height="1" fill="#ff0000"/>
<rect x="1243" y="660" width="3" height="133" fill="#ff0000"/>
<rect x="1243" y="945" width="3" height="1" fill="#ff0000"/>
<rect x="1251" y="660" width="3" height="127" fill="#db7093"/>
<rect x="1251" y="945" width="3" height="1" fill="#db7093"/>
<rect x="1259" y="660" width="3" height="126" fill="#db7093"/>
<rect x="1259" y="945" width="3" height="1" fill="#db7093"/>
<rect x="1267" y="660" width="3" height="110" fill="#db7093"/>
<rect x="1267" y="945" width="3" height="1" fill="#db7093"/>
<rect x="1275" y="660" width="3" height="101" fill="#db7093"/>
<rect x="1275" y="945" width="3" height="1" fill="#db7093"/>
<rect x="1283" y="660" width="3" height="83" fill="#db7093"/>
<rect x="1283" y="945" width="3" height="1" fill="#db7093"/>
<rect x="1291" y="660" width="3" height="61" fill="#db7093"/>
<rect x="1291" y="945" width="3" height="1" fill="#db7093"/>
<rect x="1299" y="660" width="3" height="55" fill="#db7093"/>
<rect x="1299" y="945" width="3" height="1" fill="#db7093"/>
<rect x="1307" y="660" width="3" height="51" fill="#db7093"/>
<rect x="1307" y="945" width="3" height="1" fill="#db7093"/>
<rect x="1315" y="660" width="3" height="59" fill="#ff0000"/>
<rect x="1315" y="945" width="3" height="1" fill="#ff0000"/>
<rect x="1323" y="660" width="3" height="71" fill="#ff0000"/>
<rect x="1323" y="945" width="3" height="1" fill="#ff0000"/>
<rect x="1331" y="660" width="3" height="77" fill="#ff0000"/>
<rect x="1331" y="945" width="3" height="1" fill="#ff0000"/>
<rect x="1339" y="660" width="3" height="81" fill="#ff0000"/>
<rect x="1339" y="945" width="3" height="1" fill="#ff0000"/>
<rect x="1347" y="660" width="3" height="88" fill="#ff0000"/>
<rect x="1347" y="945" width="3" height="1" fill="#ff0000"/>
<rect x="1355" y="660" width="3" height="89" fill="#ff0000"/>
<rect x="1355" y="945" width="3" height="1" fill="#ff0000"/>
<rect x="1363" y="660" width="3" height="90" fill="#ff0000"/>
<rect x="1363" y="945" width="3" height="1" fill="#ff0000"/>
<rect x="1371" y="660" width="3" height="92" fill="#ff0000"/>
<rect x="1371" y="945" width="3" height="1" fill="#ff0000"/>
<rect x="1379" y="660" width="3" height="93" fill="#ff0000"/>
<rect x="1379" y="945" width="3" height="1" fill="#ff0000"/>
<rect x="1387" y="660" width="3" height="92" fill="#db7093"/>
<rect x="1387" y="945" width="3" height="1" fill="#db7093"/>
<rect x="1395" y="660" width="3" height="89" fill="#db7093"/>
<rect x="1395" y="945" width="3" height="1" fill="#db7093"/>
<rect x="1403" y="660" width="3" height="85" fill="#db7093"/>
<rect x="1403" y="945" width="3" height="1" fill="#db7093"/>
<rect x="1411" y="660" width="3" height="84" fill="#db7093"/>
<rect x="1411" y="945" width="3" height="1" fill="#db7093"/>
<rect x="1419" y="660" width="3" height="86" fill="#ff0000"/>
<rect x="1419" y="945" width="3" height="1" fill="#ff0000"/>
<rect x="1427" y="660" width="3" height="82" fill="#db7093"/>
<rect x="1427" y="945" width="3" height="1" fill="#db7093"/>
<rect x="1435" y="660" width="3" height="79" fill="#db7093"/>
<rect x="1435" y="945" width="3" height="1" fill="#db7093"/>
<rect x="1443" y="660" width="3" height="84" fill="#ff0000"/>
<rect x="1443" y="945" width="3" height="1" fill="#ff0000"/>
<rect x="1451" y="660" width="3" height="87" fill="#ff0000"/>
<rect x="1451" y="945" width="3" height="1" fill="#ff0000"/>
<rect x="1459" y="660" width="3" height="95" fill="#ff0000"/>
<rect x="1459" y="945" width="3" height="1" fill="#ff0000"/>
<rect x="1467" y="660" width="3" height="111" fill="#ff0000"/>
<rect x="1467" y="945" width="3" height="1" fill="#ff0000"/>
<rect x="1475" y="660" width="3" height="123" fill="#ff0000"/>
<rect x="1475" y="945" width="3" height="1" fill="#ff0000"/>
<rect x="1483" y="660" width="3" height="134" fill="#ff0000"/>
<rect x="1483" y="945" width="3" height="1" fill="#ff0000"/>
<rect x="3" y="944" width="3" height="2" fill="#0000cd"/>
<rect x="27" y="933" width="3" height="13" fill="#0000cd"/>
<rect x="35" y="919" width="3" height="27" fill="#0000cd"/>
<rect x="43" y="918" width="3" height="28" fill="#0000cd"/>
<rect x="51" y="907" width="3" height="39" fill="#0000cd"/>
<rect x="59" y="902" width="3" height="44" fill="#0000cd"/>
<rect x="67" y="901" width="3" height="45" fill="#0000cd"/>
<rect x="75" y="894" width="3" height="52" fill="#0000cd"/>
<rect x="83" y="890" width="3" height="56" fill="#0000cd"/>
<rect x="91" y="911" width="3" height="35" fill="#40e0d0"/>
<rect x="99" y="912" width="3" height="34" fill="#40e0d0"/>
<rect x="107" y="913" width="3" height="33" fill="#40e0d0"/>
<rect x="115" y="920" width="3" height="26" fill="#40e0d0"/>
<rect x="123" y="921" width="3" height="25" fill="#40e0d0"/>
<rect x="131" y="916" width="3" height="30" fill="#0000cd"/>
<rect x="139" y="903" width="3" height="43" fill="#0000cd"/>
<rect x="147" y="900" width="3" height="46" fill="#0000cd"/>
<rect x="155" y="905" width="3" height="41" fill="#40e0d0"/>
<rect x="163" y="904" width="3" height="42" fill="#0000cd"/>
<rect x="171" y="894" width="3" height="52" fill="#0000cd"/>
<rect x="179" y="890" width="3" height="56" fill="#0000cd"/>
<rect x="187" y="897" width="3" height="49" fill="#40e0d0"/>
<rect x="195" y="897" width="3" height="49" fill="#40e0d0"/>
<rect x="203" y="899" width="3" height="47" fill="#40e0d0"/>
<rect x="211" y="900" width="3" height="46" fill="#40e0d0"/>
<rect x="219" y="901" width="3" height="45" fill="#40e0d0"/>
<rect x="227" y="900" width="3" height="46" fill="#0000cd"/>
<rect x="235" y="898" width="3" height="48" fill="#0000cd"/>
<rect x="243" y="902" width="3" height="44" fill="#40e0d0"/>
<rect x="251" y="908" width="3" height="38" fill="#40e0d0"/>
<rect x="259" y="911" width="3" height="35" fill="#40e0d0"/>
<rect x="267" y="913" width="3" height="33" fill="#40e0d0"/>
<rect x="275" y="918" width="3" height="28" fill="#40e0d0"/>
<rect x="283" y="927" width="3" height="19" fill="#40e0d0"/>
<rect x="291" y="932" width="3" height="14" fill="#40e0d0"/>
<rect x="299" y="941" width="3" height="5" fill="#40e0d0"/>
<rect x="403" y="943" width="3" height="3" fill="#0000cd"/>
<rect x="411" y="919" width="3" height="27" fill="#0000cd"/>
<rect x="419" y="904" width="3" height="42" fill="#0000cd"/>
<rect x="427" y="878" width="3" height="68" fill="#0000cd"/>
<rect x="435" y="886" width="3" height="60" fill="#40e0d0"/>
<rect x="443" y="888" width="3" height="58" fill="#40e0d0"/>
<rect x="451" y="881" width="3" height="65" fill="#0000cd"/>
<rect x="459" y="874" width="3" height="72" fill="#0000cd"/>
<rect x="467" y="876" width="3" height="70" fill="#40e0d0"/>
<rect x="475" y="863" width="3" height="83" fill="#0000cd"/>
<rect x="483" y="861" width="3" height="85" fill="#0000cd"/>
<rect x="491" y="870" width="3" height="76" fill="#40e0d0"/>
<rect x="499" y="873" width="3" height="73" fill="#40e0d0"/>
<rect x="507" y="851" width="3" height="95" fill="#0000cd"/>
<rect x="515" y="832" width="3" height="114" fill="#0000cd"/>
<rect x="523" y="809" width="3" height="137" fill="#0000cd"/>
<rect x="531" y="785" width="3" height="161" fill="#0000cd"/>
<rect x="539" y="765" width="3" height="181" fill="#0000cd"/>
<rect x="547" y="734" width="3" height="212" fill="#0000cd"/>
<rect x="555" y="709" width="3" height="237" fill="#0000cd"/>
<rect x="563" y="694" width="3" height="252" fill="#0000cd"/>
<rect x="571" y="683" width="3" height="263" fill="#0000cd"/>
<rect x="579" y="674" width="3" height="272" fill="#0000cd"/>
<rect x="587" y="685" width="3" height="261" fill="#40e0d0"/>
<rect x="595" y="693" width="3" height="253" fill="#40e0d0"/>
<rect x="603" y="699" width="3" height="247" fill="#40e0d0"/>
<rect x="611" y="708" width="3" height="238" fill="#40e0d0"/>
<rect x="619" y="717" width="3" height="229" fill="#40e0d0"/>
<rect x="627" y="727" width="3" height="219" fill="#40e0d0"/>
<rect x="635" y="731" width="3" height="215" fill="#40e0d0"/>
<rect x="643" y="742" width="3" height="204" fill="#40e0d0"/>
<rect x="651" y="750" width="3" height="196" fill="#40e0d0"/>
<rect x="659" y="758" width="3" height="188" fill="#40e0d0"/>
<rect x="667" y="764" width="3" height="182" fill="#40e0d0"/>
<rect x="675" y="770" width="3" height="176" fill="#40e0d0"/>
<rect x="683" y="782" width="3" height="164" fill="#40e0d0"/>
<rect x="691" y="790" width="3" height="156" fill="#40e0d0"/>
<rect x="699" y="780" width="3" height="166" fill="#0000cd"/>
<rect x="707" y="779" width="3" height="167" fill="#0000cd"/>
<rect x="715" y="778" width="3" height="168" fill="#0000cd"/>
<rect x="723" y="781" width="3" height="165" fill="#40e0d0"/>
<rect x="731" y="788" width="3" height="158" fill="#40e0d0"/>
<rect x="739" y="796" width="3" height="150" fill="#40e0d0"/>
<rect x="747" y="802" width="3" height="144" fill="#40e0d0"/>
<rect x="755" y="808" width="3" height="138" fill="#40e0d0"/>
<rect x="763" y="808" width="3" height="138" fill="#40e0d0"/>
<rect x="771" y="811" width="3" height="135" fill="#40e0d0"/>
<rect x="779" y="824" width="3" height="122" fill="#40e0d0"/>
<rect x="787" y="853" width="3" height="93" fill="#40e0d0"/>
<rect x="795" y="889" width="3" height="57" fill="#40e0d0"/>
<rect x="803" y="918" width="3" height="28" fill="#40e0d0"/>
<rect x="811" y="944" width="3" height="2" fill="#40e0d0"/>
</g>
<rect x="1581" y="926" width="70" height="20" fill="#b2b2b2"/>
<rect x="1582" y="927" width="68" height="18" fill="#696969"/>
<text x="1615" y="940" fill="#00ff7f" font-family="Liberation Sans, sans-serif" font-size="11.2px" letter-spacing="0.15" text-anchor="middle" shape-rendering="auto">AOup-off</text>
<rect x="1651" y="926" width="70" height="20" fill="#b2b2b2"/>
<rect x="1652" y="927" width="68" height="18" fill="#696969"/>
<text x="1685" y="940" fill="#00ff7f" font-family="Liberation Sans, sans-serif" font-size="11.2px" letter-spacing="0.15" text-anchor="middle" shape-rendering="auto">REX-off</text>
<rect x="1721" y="926" width="70" height="20" fill="#b2b2b2"/>
<rect x="1722" y="927" width="68" height="18" fill="#696969"/>
<text x="1755" y="940" fill="#00ff7f" font-family="Liberation Sans, sans-serif" font-size="11.2px" letter-spacing="0.15" text-anchor="middle" shape-rendering="auto">AOdn-off</text>
<g fill="#fff">
<rect x="1872" y="84" width="2" height="1"/>
<rect x="1872" y="117" width="2" height="1"/>
<rect x="1872" y="151" width="2" height="1"/>
<rect x="1872" y="184" width="2" height="1"/>
<rect x="1872" y="218" width="2" height="1"/>
<rect x="1872" y="251" width="2" height="1"/>
<rect x="1872" y="285" width="2" height="1"/>
<rect x="1872" y="318" width="2" height="1"/>
<rect x="1872" y="352" width="2" height="1"/>
<rect x="1872" y="385" width="2" height="1"/>
<rect x="1872" y="419" width="2" height="1"/>
<rect x="1872" y="452" width="2" height="1"/>
<rect x="1872" y="486" width="2" height="1"/>
<rect x="1872" y="519" width="2" height="1"/>
<rect x="1872" y="553" width="2" height="1"/>
<rect x="1872" y="586" width="2" height="1"/>
<rect x="1872" y="620" width="2" height="1"/>
<rect x="1872" y="653" width="2" height="1"/>
<rect x="1872" y="661" width="1" height="1"/>
<rect x="1872" y="826" width="1" height="1"/>
<rect x="1872" y="939" width="1" height="1"/>
</g>
<text transform="translate(1877,88) scale(0.9569,1)" fill="#fff" font-family="Liberation Sans, sans-serif" font-size="9.75px" shape-rendering="auto" xml:space="preserve" >1.07015</text>
<text transform="translate(1877,121) scale(0.9569,1)" fill="#fff" font-family="Liberation Sans, sans-serif" font-size="9.75px" shape-rendering="auto" xml:space="preserve" >1.06920</text>
<text transform="translate(1877,155) scale(0.9569,1)" fill="#fff" font-family="Liberation Sans, sans-serif" font-size="9.75px" shape-rendering="auto" xml:space="preserve" >1.06825</text>
<text transform="translate(1877,188) scale(0.9569,1)" fill="#fff" font-family="Liberation Sans, sans-serif" font-size="9.75px" shape-rendering="auto" xml:space="preserve" >1.06730</text>
<text transform="translate(1877,222) scale(0.9569,1)" fill="#fff" font-family="Liberation Sans, sans-serif" font-size="9.75px" shape-rendering="auto" xml:space="preserve" >1.06635</text>
<text transform="translate(1877,255) scale(0.9569,1)" fill="#fff" font-family="Liberation Sans, sans-serif" font-size="9.75px" shape-rendering="auto" xml:space="preserve" >1.06540</text>
<text transform="translate(1877,289) scale(0.9569,1)" fill="#fff" font-family="Liberation Sans, sans-serif" font-size="9.75px" shape-rendering="auto" xml:space="preserve" >1.06445</text>
<text transform="translate(1877,322) scale(0.9569,1)" fill="#fff" font-family="Liberation Sans, sans-serif" font-size="9.75px" shape-rendering="auto" xml:space="preserve" >1.06350</text>
<text transform="translate(1877,356) scale(0.9569,1)" fill="#fff" font-family="Liberation Sans, sans-serif" font-size="9.75px" shape-rendering="auto" xml:space="preserve" >1.06255</text>
<text transform="translate(1877,389) scale(0.9569,1)" fill="#fff" font-family="Liberation Sans, sans-serif" font-size="9.75px" shape-rendering="auto" xml:space="preserve" >1.06160</text>
<text transform="translate(1877,423) scale(0.9569,1)" fill="#fff" font-family="Liberation Sans, sans-serif" font-size="9.75px" shape-rendering="auto" xml:space="preserve" >1.06065</text>
<text transform="translate(1877,456) scale(0.9569,1)" fill="#fff" font-family="Liberation Sans, sans-serif" font-size="9.75px" shape-rendering="auto" xml:space="preserve" >1.05970</text>
<text transform="translate(1877,490) scale(0.9569,1)" fill="#fff" font-family="Liberation Sans, sans-serif" font-size="9.75px" shape-rendering="auto" xml:space="preserve" >1.05875</text>
<text transform="translate(1877,523) scale(0.9569,1)" fill="#fff" font-family="Liberation Sans, sans-serif" font-size="9.75px" shape-rendering="auto" xml:space="preserve" >1.05780</text>
<text transform="translate(1877,557) scale(0.9569,1)" fill="#fff" font-family="Liberation Sans, sans-serif" font-size="9.75px" shape-rendering="auto" xml:space="preserve" >1.05685</text>
<text transform="translate(1877,590) scale(0.9569,1)" fill="#fff" font-family="Liberation Sans, sans-serif" font-size="9.75px" shape-rendering="auto" xml:space="preserve" >1.05590</text>
<text transform="translate(1877,624) scale(0.9569,1)" fill="#fff" font-family="Liberation Sans, sans-serif" font-size="9.75px" shape-rendering="auto" xml:space="preserve" >1.05495</text>
<text transform="translate(1877,657) scale(0.9569,1)" fill="#fff" font-family="Liberation Sans, sans-serif" font-size="9.75px" shape-rendering="auto" xml:space="preserve" >1.05400</text>
<text transform="translate(1875,670) scale(0.9569,1)" fill="#fff" font-family="Liberation Sans, sans-serif" font-size="9.75px" shape-rendering="auto" xml:space="preserve" >0.001</text>
<text transform="translate(1875,830) scale(0.9569,1)" fill="#fff" font-family="Liberation Sans, sans-serif" font-size="9.75px" shape-rendering="auto" xml:space="preserve" >0.00</text>
<text transform="translate(1875.5,943) scale(0.9569,1)" fill="#fff" font-family="Liberation Sans, sans-serif" font-size="9.75px" shape-rendering="auto" xml:space="preserve" >-0.0008</text>
<text transform="translate(19,93) scale(0.9569,1)" fill="#fff" font-family="Liberation Sans, sans-serif" font-size="9.75px" shape-rendering="auto" xml:space="preserve" >EURUSD,M30  1.05453 1.05476 1.05434 1.05435</text>
<rect x="1873" y="636" width="41" height="11" fill="#fff"/>
<text transform="translate(1877,645) scale(0.9569,1)" fill="#000" font-family="Liberation Sans, sans-serif" font-size="9.75px" shape-rendering="auto" xml:space="preserve" >1.05435</text>
<path d="M7 88h7l-3.5 4z" fill="#fff" shape-rendering="auto"/>
<path d="M1492 82h9.400l-4.700 5.200z" fill="#778899" shape-rendering="auto"/>
<rect x="4" y="947" width="1" height="3" fill="#fff"/>
<text transform="translate(3,959) scale(0.9569,1)" fill="#fff" font-family="Liberation Sans, sans-serif" font-size="9.75px" shape-rendering="auto" xml:space="preserve" >20 Oct 2023</text>
<rect x="68" y="947" width="1" height="3" fill="#fff"/>
<text transform="translate(67,959) scale(0.9569,1)" fill="#fff" font-family="Liberation Sans, sans-serif" font-size="9.75px" shape-rendering="auto" xml:space="preserve" >20 Oct 13:30</text>
<rect x="132" y="947" width="1" height="3" fill="#fff"/>
<text transform="translate(131,959) scale(0.9569,1)" fill="#fff" font-family="Liberation Sans, sans-serif" font-size="9.75px" shape-rendering="auto" xml:space="preserve" >20 Oct 17:30</text>
<rect x="196" y="947" width="1" height="3" fill="#fff"/>
<text transform="translate(195,959) scale(0.9569,1)" fill="#fff" font-family="Liberation Sans, sans-serif" font-size="9.75px" shape-rendering="auto" xml:space="preserve" >20 Oct 21:30</text>
<rect x="260" y="947" width="1" height="3" fill="#fff"/>
<text transform="translate(259,959) scale(0.9569,1)" fill="#fff" font-family="Liberation Sans, sans-serif" font-size="9.75px" shape-rendering="auto" xml:space="preserve" >23 Oct 01:30</text>
<rect x="324" y="947" width="1" height="3" fill="#fff"/>
<text transform="translate(323,959) scale(0.9569,1)" fill="#fff" font-family="Liberation Sans, sans-serif" font-size="9.75px" shape-rendering="auto" xml:space="preserve" >23 Oct 05:30</text>
<rect x="388" y="947" width="1" height="3" fill="#fff"/>
<text transform="translate(387,959) scale(0.9569,1)" fill="#fff" font-family="Liberation Sans, sans-serif" font-size="9.75px" shape-rendering="auto" xml:space="preserve" >23 Oct 09:30</text>
<rect x="452" y="947" width="1" height="3" fill="#fff"/>
<text transform="translate(451,959) scale(0.9569,1)" fill="#fff" font-family="Liberation Sans, sans-serif" font-size="9.75px" shape-rendering="auto" xml:space="preserve" >23 Oct 13:30</text>
<rect x="516" y="947" width="1" height="3" fill="#fff"/>
<text transform="translate(515,959) scale(0.9569,1)" fill="#fff" font-family="Liberation Sans, sans-serif" font-size="9.75px" shape-rendering="auto" xml:space="preserve" >23 Oct 17:30</text>
<rect x="580" y="947" width="1" height="3" fill="#fff"/>
<text transform="translate(579,959) scale(0.9569,1)" fill="#fff" font-family="Liberation Sans, sans-serif" font-size="9.75px" shape-rendering="auto" xml:space="preserve" >23 Oct 21:30</text>
<rect x="644" y="947" width="1" height="3" fill="#fff"/>
<text transform="translate(643,959) scale(0.9569,1)" fill="#fff" font-family="Liberation Sans, sans-serif" font-size="9.75px" shape-rendering="auto" xml:space="preserve" >24 Oct 01:30</text>
<rect x="708" y="947" width="1" height="3" fill="#fff"/>
<text transform="translate(707,959) scale(0.9569,1)" fill="#fff" font-family="Liberation Sans, sans-serif" font-size="9.75px" shape-rendering="auto" xml:space="preserve" >24 Oct 05:30</text>
<rect x="772" y="947" width="1" height="3" fill="#fff"/>
<text transform="translate(771,959) scale(0.9569,1)" fill="#fff" font-family="Liberation Sans, sans-serif" font-size="9.75px" shape-rendering="auto" xml:space="preserve" >24 Oct 09:30</text>
<rect x="836" y="947" width="1" height="3" fill="#fff"/>
<text transform="translate(835,959) scale(0.9569,1)" fill="#fff" font-family="Liberation Sans, sans-serif" font-size="9.75px" shape-rendering="auto" xml:space="preserve" >24 Oct 13:30</text>
<rect x="900" y="947" width="1" height="3" fill="#fff"/>
<text transform="translate(899,959) scale(0.9569,1)" fill="#fff" font-family="Liberation Sans, sans-serif" font-size="9.75px" shape-rendering="auto" xml:space="preserve" >24 Oct 17:30</text>
<rect x="964" y="947" width="1" height="3" fill="#fff"/>
<text transform="translate(963,959) scale(0.9569,1)" fill="#fff" font-family="Liberation Sans, sans-serif" font-size="9.75px" shape-rendering="auto" xml:space="preserve" >24 Oct 21:30</text>
<rect x="1028" y="947" width="1" height="3" fill="#fff"/>
<text transform="translate(1027,959) scale(0.9569,1)" fill="#fff" font-family="Liberation Sans, sans-serif" font-size="9.75px" shape-rendering="auto" xml:space="preserve" >25 Oct 01:30</text>
<rect x="1092" y="947" width="1" height="3" fill="#fff"/>
<text transform="translate(1091,959) scale(0.9569,1)" fill="#fff" font-family="Liberation Sans, sans-serif" font-size="9.75px" shape-rendering="auto" xml:space="preserve" >25 Oct 05:30</text>
<rect x="1156" y="947" width="1" height="3" fill="#fff"/>
<text transform="translate(1155,959) scale(0.9569,1)" fill="#fff" font-family="Liberation Sans, sans-serif" font-size="9.75px" shape-rendering="auto" xml:space="preserve" >25 Oct 09:30</text>
<rect x="1220" y="947" width="1" height="3" fill="#fff"/>
<text transform="translate(1219,959) scale(0.9569,1)" fill="#fff" font-family="Liberation Sans, sans-serif" font-size="9.75px" shape-rendering="auto" xml:space="preserve" >25 Oct 13:30</text>
<rect x="1284" y="947" width="1" height="3" fill="#fff"/>
<text transform="translate(1283,959) scale(0.9569,1)" fill="#fff" font-family="Liberation Sans, sans-serif" font-size="9.75px" shape-rendering="auto" xml:space="preserve" >25 Oct 17:30</text>
<rect x="1348" y="947" width="1" height="3" fill="#fff"/>
<text transform="translate(1347,959) scale(0.9569,1)" fill="#fff" font-family="Liberation Sans, sans-serif" font-size="9.75px" shape-rendering="auto" xml:space="preserve" >25 Oct 21:30</text>
<rect x="1412" y="947" width="1" height="3" fill="#fff"/>
<text transform="translate(1411,959) scale(0.9569,1)" fill="#fff" font-family="Liberation Sans, sans-serif" font-size="9.75px" shape-rendering="auto" xml:space="preserve" >26 Oct 01:30</text>
<rect x="1476" y="947" width="1" height="3" fill="#fff"/>
<text transform="translate(1475,959) scale(0.9569,1)" fill="#fff" font-family="Liberation Sans, sans-serif" font-size="9.75px" shape-rendering="auto" xml:space="preserve" >26 Oct 05:30</text>
</svg>
<svg width="1914" height="49" viewBox="0 968 1914 49" style="position:absolute;left:0;top:968px">
<rect x="0" y="968" width="1914" height="49" fill="#f0f0f0"/>
<g shape-rendering="crispEdges">
<rect x="0" y="968" width="1914" height="1" fill="#fff"/>
<rect x="0" y="969" width="1914" height="1" fill="#000"/>
<rect x="0" y="970" width="1914" height="1" fill="#fff"/>
<rect x="0" y="969" width="1" height="19" fill="#696969"/>
<rect x="193" y="969" width="100" height="19" fill="#000"/><rect x="194" y="968" width="98" height="19" fill="#fff"/>
<rect x="105" y="973" width="1" height="13" fill="#808080"/>
<rect x="0" y="989" width="1914" height="1" fill="#fff"/>
<rect x="0" y="1013" width="1914" height="4" fill="#e3edf8"/><rect x="0" y="1012" width="1914" height="1" fill="#b8bdc6"/><rect x="0" y="1011" width="1914" height="1" fill="#f4f3f2"/>
<rect x="1123" y="993" width="1" height="17" fill="#a0a0a0"/>
<rect x="1258" y="993" width="1" height="17" fill="#a0a0a0"/>
<rect x="1375" y="993" width="1" height="17" fill="#a0a0a0"/>
<rect x="1457" y="993" width="1" height="17" fill="#a0a0a0"/>
<rect x="1538" y="993" width="1" height="17" fill="#a0a0a0"/>
<rect x="1616" y="993" width="1" height="17" fill="#a0a0a0"/>
<rect x="1696" y="993" width="1" height="17" fill="#a0a0a0"/>
<rect x="1774" y="993" width="1" height="17" fill="#a0a0a0"/>
<rect x="1780" y="995" width="2" height="8" fill="#4a6a00"/>
<rect x="1780" y="1004" width="2" height="4" fill="#00304a"/>
<rect x="1783" y="995" width="2" height="7" fill="#4a6a00"/>
<rect x="1783" y="1003" width="2" height="5" fill="#00304a"/>
<rect x="1786" y="995" width="2" height="6" fill="#4a6a00"/>
<rect x="1786" y="1002" width="2" height="6" fill="#00304a"/>
<rect x="1789" y="995" width="2" height="5" fill="#4a6a00"/>
<rect x="1789" y="1001" width="2" height="7" fill="#00304a"/>
<rect x="1792" y="995" width="2" height="4" fill="#4a6a00"/>
<rect x="1792" y="1000" width="2" height="8" fill="#00304a"/>
<rect x="1795" y="995" width="2" height="3" fill="#4a6a00"/>
<rect x="1795" y="999" width="2" height="9" fill="#00304a"/>
<rect x="1798" y="995" width="2" height="2" fill="#4a6a00"/>
<rect x="1798" y="998" width="2" height="10" fill="#00304a"/>
<rect x="1801" y="995" width="2" height="1" fill="#4a6a00"/>
<rect x="1801" y="997" width="2" height="11" fill="#00304a"/>
</g>
<g font-family="Liberation Sans, Noto Sans CJK SC, sans-serif" font-size="12px">
<text x="16" y="984" fill="#808080">EURUSD,M30</text><text x="116" y="984" fill="#808080">USDJPY,M1</text><text x="204" y="984" fill="#000">EURUSD,M30</text>
<text x="1" y="1006" fill="#000">寻求帮助,请按F1键</text>
<text x="1129" y="1006" fill="#000" font-size="12.6px" textLength="41" lengthAdjust="spacingAndGlyphs">Default</text>
<text x="1807.500" y="1006" fill="#000" font-size="12.6px" textLength="58" lengthAdjust="spacingAndGlyphs">1255/4 kb</text>
</g>
<path d="M1890.500 975v6l-4-3z" fill="#808080"/><path d="M1905.500 975v6l4-3z" fill="#808080"/>
</svg>
</body></html>
